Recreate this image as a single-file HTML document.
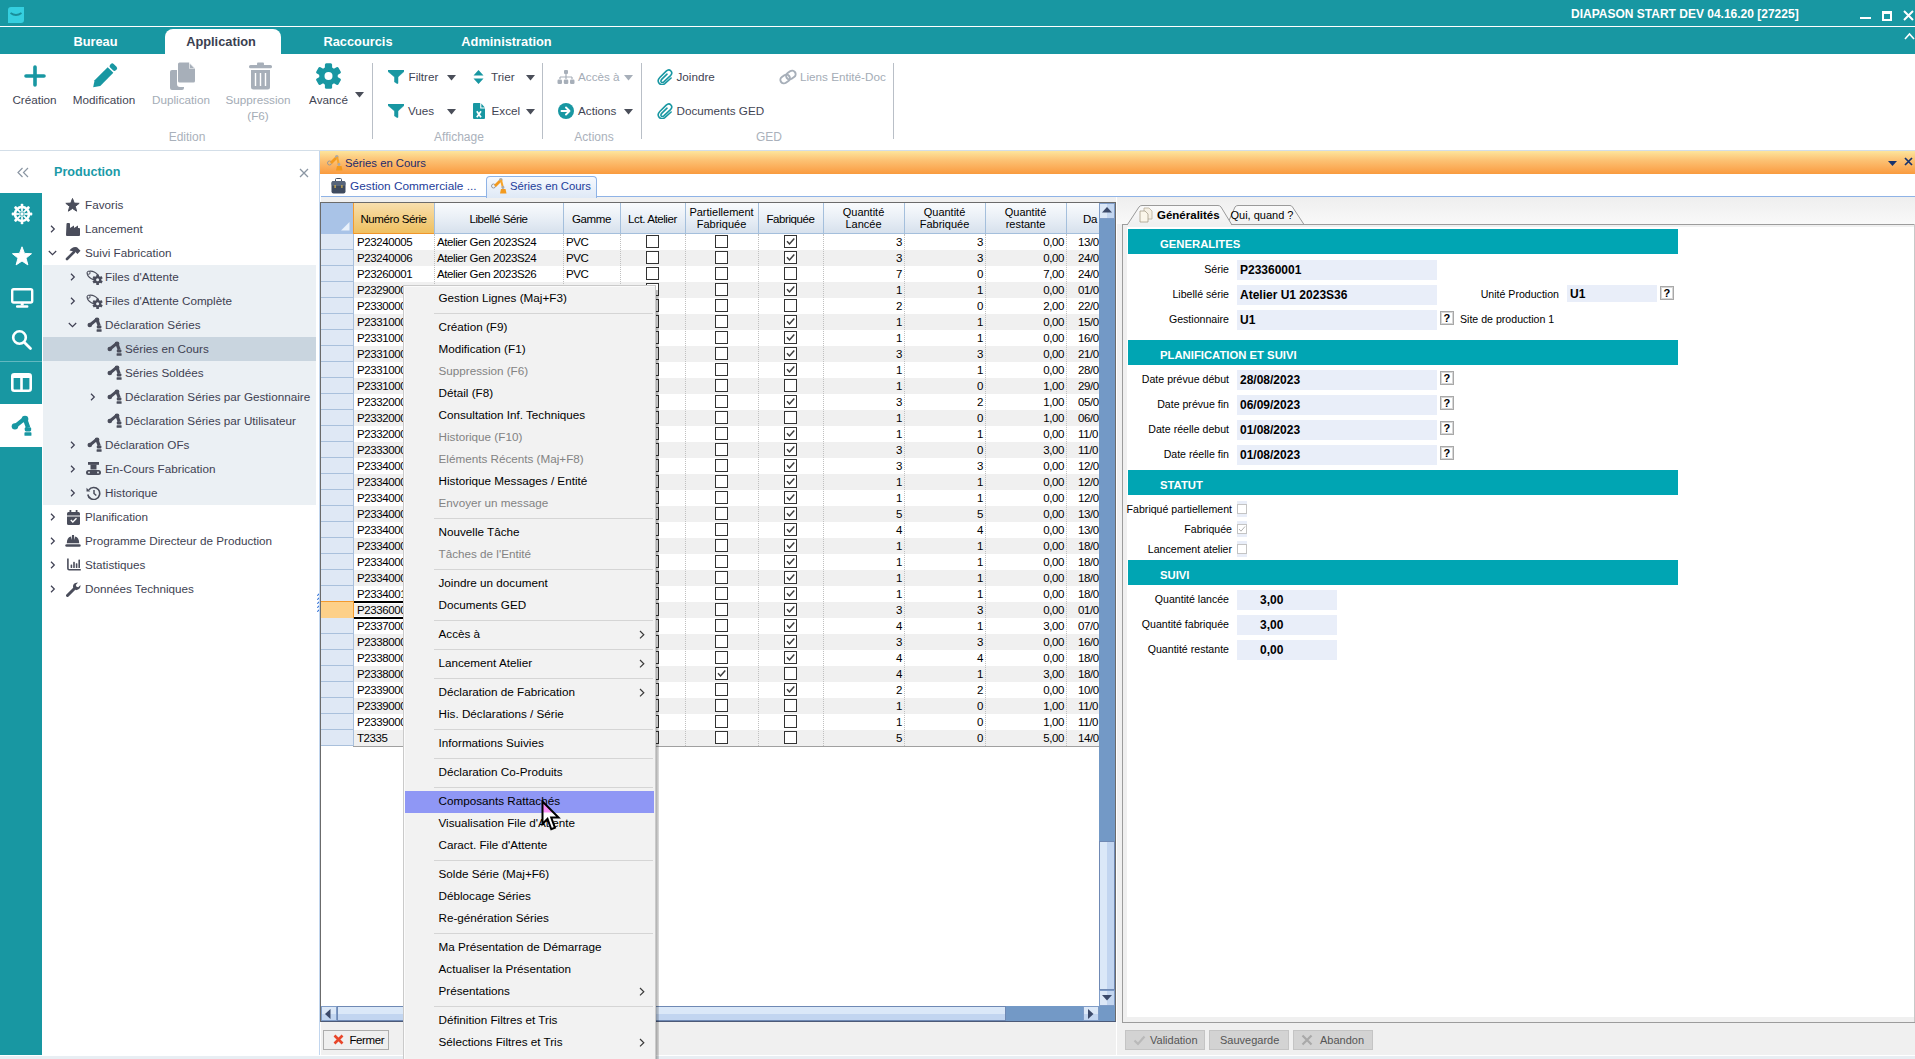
<!DOCTYPE html><html><head><meta charset="utf-8"><style>
html,body{margin:0;padding:0;width:1915px;height:1059px;overflow:hidden;background:#fff;position:relative;font-family:"Liberation Sans",sans-serif;}
.r{position:absolute;}
.t{position:absolute;white-space:nowrap;font-size:12px;color:#3d4352;}
.rb{font-size:11.7px;color:#3f4453;}
.dis{color:#a4acb6;}
.grp{color:#aab1bb;}
.tab{font-weight:bold;font-size:12.8px;color:#fff;}
.tree{font-size:11.7px;color:#3e3f52;}
.g{font-size:11.5px;letter-spacing:-0.4px;color:#000;}
.gh{font-size:11px;color:#000;text-align:center;line-height:12px !important;}
.m{font-size:11.7px;color:#000;}
.md{font-size:11.7px;color:#838383;}
.lbl{font-size:10.6px;color:#000;}
.val{font-size:12px;font-weight:bold;color:#000;}
.sec{font-size:11.3px;font-weight:bold;color:#fff;}
</style></head><body>

<div class="r" style="left:0px;top:0px;width:1915px;height:26px;background:#1897a2"></div>
<div class="r" style="left:0px;top:26px;width:1915px;height:1px;background:#ffffff"></div>
<div class="r" style="left:0px;top:27px;width:1915px;height:27px;background:#1897a2"></div>
<div class="r" style="left:8px;top:7px;width:16px;height:16px;background:#35cfdf;border-radius:3px 0 3px 0"></div>
<svg class="r" style="left:10px;top:12px" width="12" height="5" viewBox="0 0 12 5"><path d="M0.5 1 Q6 5 11.5 1" stroke="#1a8e9a" stroke-width="1.8" fill="none"/></svg>
<div class="t " style="left:1571px;top:5.0px;height:18px;line-height:18px;color:#fff;font-weight:bold;font-size:12px">DIAPASON START DEV 04.16.20 [27225]</div>
<div class="r" style="left:1860px;top:17px;width:11px;height:2px;background:#fff"></div>
<div class="r" style="left:1882px;top:11px;width:10px;height:10px;border:2px solid #fff;border-top-width:3px;box-sizing:border-box"></div>
<svg class="r" style="left:1903px;top:10px" width="11" height="11" viewBox="0 0 11 11"><path d="M1 1 L10 10 M10 1 L1 10" stroke="#fff" stroke-width="2"/></svg>
<svg class="r" style="left:1904px;top:32px" width="11" height="8" viewBox="0 0 11 8"><path d="M1 7 L5.5 2 L10 7" stroke="#fff" stroke-width="1.6" fill="none"/></svg>
<div class="r" style="left:165px;top:29px;width:116px;height:25px;background:#fff;border-radius:8px 8px 0 0"></div>
<div class="t tab" style="left:-104.5px;width:400px;text-align:center;top:32.5px;height:18px;line-height:18px;">Bureau</div>
<div class="t tab" style="left:21px;width:400px;text-align:center;top:32.5px;height:18px;line-height:18px;color:#3a4050">Application</div>
<div class="t tab" style="left:158px;width:400px;text-align:center;top:32.5px;height:18px;line-height:18px;">Raccourcis</div>
<div class="t tab" style="left:306.5px;width:400px;text-align:center;top:32.5px;height:18px;line-height:18px;">Administration</div>
<div class="r" style="left:0px;top:150px;width:1915px;height:1px;background:#d3dee8"></div>
<svg class="r" style="left:24px;top:65px" width="22" height="22" viewBox="0 0 22 22"><path d="M11 2 V20 M2 11 H20" stroke="#1897a2" stroke-width="3.6" stroke-linecap="round"/></svg>
<div class="t rb" style="left:-165.5px;width:400px;text-align:center;top:91.5px;height:16px;line-height:16px;">Création</div>
<svg class="r" style="left:91px;top:62px" width="27" height="28" viewBox="0 0 27 28"><g transform="rotate(45 13.5 14)"><rect x="9.5" y="-1" width="8" height="5" rx="2" fill="#1897a2"/><path d="M9.5 5.5 H17.5 V24 L13.5 30 L9.5 24 Z" fill="#1897a2"/></g></svg>
<div class="t rb" style="left:-96px;width:400px;text-align:center;top:91.5px;height:16px;line-height:16px;">Modification</div>
<svg class="r" style="left:168px;top:62px" width="28" height="28" viewBox="0 0 28 28"><path d="M2 10 Q2 8 4 8 H9 V22 Q9 25 12 25 H16 V26 Q16 28 14 28 H4 Q2 28 2 26 Z" fill="#a7afb9"/><path d="M10 2 Q10 0.5 11.5 0.5 H21 L27 6.5 V19 Q27 20.5 25.5 20.5 H11.5 Q10 20.5 10 19 Z" fill="#a7afb9"/><path d="M21 0.5 V6.5 H27" fill="#fff"/><path d="M21.6 1.5 L26 5.9 H21.6 Z" fill="#a7afb9"/></svg>
<div class="t rb dis" style="left:-19px;width:400px;text-align:center;top:91.5px;height:16px;line-height:16px;">Duplication</div>
<svg class="r" style="left:249px;top:62px" width="23" height="28" viewBox="0 0 23 28"><rect x="0" y="3" width="23" height="3.2" rx="1.5" fill="#a7afb9"/><rect x="8" y="0.5" width="7" height="3" rx="1" fill="#a7afb9"/><path d="M2 8 H21 V25 Q21 27.5 18.5 27.5 H4.5 Q2 27.5 2 25 Z" fill="#a7afb9"/><path d="M6.5 11 V24 M11.5 11 V24 M16.5 11 V24" stroke="#fff" stroke-width="1.4"/></svg>
<div class="t rb dis" style="left:58px;width:400px;text-align:center;top:91.5px;height:16px;line-height:16px;">Suppression</div>
<div class="t rb dis" style="left:58px;width:400px;text-align:center;top:107.5px;height:16px;line-height:16px;">(F6)</div>
<svg class="r" style="left:316px;top:63px" width="25" height="26" viewBox="0 0 25 26"><g transform="translate(12.5 13)"><rect x="-3.6" y="-12.8" width="7.2" height="6" rx="1.5" transform="rotate(0)" fill="#1897a2"/><rect x="-3.6" y="-12.8" width="7.2" height="6" rx="1.5" transform="rotate(60)" fill="#1897a2"/><rect x="-3.6" y="-12.8" width="7.2" height="6" rx="1.5" transform="rotate(120)" fill="#1897a2"/><rect x="-3.6" y="-12.8" width="7.2" height="6" rx="1.5" transform="rotate(180)" fill="#1897a2"/><rect x="-3.6" y="-12.8" width="7.2" height="6" rx="1.5" transform="rotate(240)" fill="#1897a2"/><rect x="-3.6" y="-12.8" width="7.2" height="6" rx="1.5" transform="rotate(300)" fill="#1897a2"/><circle r="9.3" fill="#1897a2"/><circle r="4" fill="#fff"/></g></svg>
<div class="t rb" style="left:128.5px;width:400px;text-align:center;top:91.5px;height:16px;line-height:16px;">Avancé</div>
<svg class="r" style="left:355px;top:92px" width="9" height="6" viewBox="0 0 9 6"><path d="M0 0 H9 L4.5 5.5 Z" fill="#4a4e59"/></svg>
<div class="t grp" style="left:-13px;width:400px;text-align:center;top:129.0px;height:16px;line-height:16px;">Edition</div>
<div class="r" style="left:372px;top:63px;width:1px;height:76px;background:#b9bfc7"></div>
<div class="r" style="left:542px;top:63px;width:1px;height:76px;background:#b9bfc7"></div>
<div class="r" style="left:641px;top:63px;width:1px;height:76px;background:#b9bfc7"></div>
<div class="r" style="left:893px;top:63px;width:1px;height:76px;background:#b9bfc7"></div>
<svg class="r" style="left:388px;top:70px" width="16" height="14" viewBox="0 0 16 14"><path d="M0 0 H16 V1.5 L10 7 V13 Q10 14 9 13.5 L6.5 12 V7 L0 1.5 Z" fill="#1897a2" stroke="#1897a2" stroke-width="0.5" stroke-linejoin="round"/></svg>
<div class="t rb" style="left:408.5px;top:68.7px;height:16px;line-height:16px;">Filtrer</div>
<svg class="r" style="left:447px;top:75px" width="9" height="6" viewBox="0 0 9 6"><path d="M0 0 H9 L4.5 5.5 Z" fill="#4a4e59"/></svg>
<svg class="r" style="left:388px;top:104px" width="16" height="14" viewBox="0 0 16 14"><path d="M0 0 H16 V1.5 L10 7 V13 Q10 14 9 13.5 L6.5 12 V7 L0 1.5 Z" fill="#1897a2" stroke="#1897a2" stroke-width="0.5" stroke-linejoin="round"/></svg>
<div class="t rb" style="left:408px;top:102.7px;height:16px;line-height:16px;">Vues</div>
<svg class="r" style="left:447px;top:109px" width="9" height="6" viewBox="0 0 9 6"><path d="M0 0 H9 L4.5 5.5 Z" fill="#4a4e59"/></svg>
<svg class="r" style="left:473px;top:70px" width="11" height="14" viewBox="0 0 11 14"><path d="M5.5 0 L10.5 5.5 H0.5 Z M0.5 8.5 H10.5 L5.5 14 Z" fill="#1897a2"/></svg>
<div class="t rb" style="left:491px;top:68.7px;height:16px;line-height:16px;">Trier</div>
<svg class="r" style="left:526px;top:75px" width="9" height="6" viewBox="0 0 9 6"><path d="M0 0 H9 L4.5 5.5 Z" fill="#4a4e59"/></svg>
<svg class="r" style="left:473px;top:103px" width="12" height="16" viewBox="0 0 12 16"><path d="M1 0 H7.2 V5.5 H12 V15 Q12 16 11 16 H1 Q0 16 0 15 V1 Q0 0 1 0 Z" fill="#1897a2"/><path d="M8.3 0.6 L11.8 4.4 H8.3 Z" fill="#1897a2"/><path d="M3.8 8.2 L8 14.2 M8 8.2 L3.8 14.2" stroke="#fff" stroke-width="1.7"/></svg>
<div class="t rb" style="left:491.5px;top:102.7px;height:16px;line-height:16px;">Excel</div>
<svg class="r" style="left:526px;top:109px" width="9" height="6" viewBox="0 0 9 6"><path d="M0 0 H9 L4.5 5.5 Z" fill="#4a4e59"/></svg>
<div class="t grp" style="left:259px;width:400px;text-align:center;top:129.0px;height:16px;line-height:16px;">Affichage</div>
<svg class="r" style="left:557px;top:70px" width="18" height="14" viewBox="0 0 18 14"><rect x="7" y="0" width="4" height="4" rx="1" fill="#a7afb9"/><path d="M9 4 V7 M3 7 H15 M3 7 V9 M9 7 V9 M15 7 V9" stroke="#a7afb9" stroke-width="1.2" fill="none"/><rect x="0.5" y="9.5" width="4.5" height="4.5" rx="1.2" fill="#a7afb9"/><rect x="6.8" y="9.5" width="4.5" height="4.5" rx="1.2" fill="#a7afb9"/><rect x="13" y="9.5" width="4.5" height="4.5" rx="1.2" fill="#a7afb9"/></svg>
<div class="t rb dis" style="left:578px;top:68.7px;height:16px;line-height:16px;">Accès à</div>
<svg class="r" style="left:624px;top:75px" width="9" height="6" viewBox="0 0 9 6"><path d="M0 0 H9 L4.5 5.5 Z" fill="#a7afb9"/></svg>
<svg class="r" style="left:558px;top:103px" width="16" height="16" viewBox="0 0 16 16"><circle cx="8" cy="8" r="8" fill="#1897a2"/><path d="M3.5 8 H11.5 M8 4.5 L11.5 8 L8 11.5" stroke="#fff" stroke-width="1.9" fill="none" stroke-linecap="round" stroke-linejoin="round"/></svg>
<div class="t rb" style="left:578px;top:102.7px;height:16px;line-height:16px;">Actions</div>
<svg class="r" style="left:624px;top:109px" width="9" height="6" viewBox="0 0 9 6"><path d="M0 0 H9 L4.5 5.5 Z" fill="#4a4e59"/></svg>
<div class="t grp" style="left:394px;width:400px;text-align:center;top:129.0px;height:16px;line-height:16px;">Actions</div>
<svg class="r" style="left:657px;top:69px" width="16" height="16" viewBox="0 0 16 16"><path d="M14.1 9 L7.8 14.6 Q4.6 17 2.2 14.4 Q-0.2 11.6 2.8 8.5 L9.2 2.2 Q11.8 -0.2 13.9 2 Q15.9 4.2 13.5 6.6 L6.8 12.8 Q5.2 14.1 4.2 12.9 Q3.4 11.7 4.9 10.1 L10 5.2" stroke="#1897a2" stroke-width="1.6" fill="none" stroke-linecap="round"/></svg>
<div class="t rb" style="left:676.5px;top:68.7px;height:16px;line-height:16px;">Joindre</div>
<svg class="r" style="left:657px;top:103px" width="16" height="16" viewBox="0 0 16 16"><path d="M14.1 9 L7.8 14.6 Q4.6 17 2.2 14.4 Q-0.2 11.6 2.8 8.5 L9.2 2.2 Q11.8 -0.2 13.9 2 Q15.9 4.2 13.5 6.6 L6.8 12.8 Q5.2 14.1 4.2 12.9 Q3.4 11.7 4.9 10.1 L10 5.2" stroke="#1897a2" stroke-width="1.6" fill="none" stroke-linecap="round"/></svg>
<div class="t rb" style="left:676.5px;top:102.7px;height:16px;line-height:16px;">Documents GED</div>
<svg class="r" style="left:778px;top:69px" width="20" height="16" viewBox="0 0 20 16"><g stroke="#a7afb9" stroke-width="2" fill="none" transform="rotate(-35 10 8)"><rect x="1.5" y="4.5" width="10" height="7" rx="3.5"/><rect x="8.5" y="4.5" width="10" height="7" rx="3.5"/></g></svg>
<div class="t rb dis" style="left:800px;top:68.7px;height:16px;line-height:16px;">Liens Entité-Doc</div>
<div class="t grp" style="left:569px;width:400px;text-align:center;top:129.0px;height:16px;line-height:16px;">GED</div>
<div class="r" style="left:0px;top:193px;width:42px;height:862px;background:#1897a2"></div>
<div class="r" style="left:0px;top:1055px;width:1915px;height:1px;background:#ffffff"></div>
<div class="r" style="left:0px;top:1056px;width:1915px;height:3px;background:#e8eef3"></div>
<svg class="r" style="left:11px;top:203px" width="22" height="22" viewBox="0 0 22 22"><g transform="translate(11 11)"><circle r="7" fill="none" stroke="#fff" stroke-width="2.6"/><circle r="1.7" fill="#fff"/><g transform="rotate(0)"><path d="M0 -2.2 V-8.6" stroke="#fff" stroke-width="1.7"/><rect x="-1.4" y="-10.3" width="2.8" height="2.6" rx="1" fill="#fff"/></g><g transform="rotate(45)"><path d="M0 -2.2 V-8.6" stroke="#fff" stroke-width="1.7"/><rect x="-1.4" y="-10.3" width="2.8" height="2.6" rx="1" fill="#fff"/></g><g transform="rotate(90)"><path d="M0 -2.2 V-8.6" stroke="#fff" stroke-width="1.7"/><rect x="-1.4" y="-10.3" width="2.8" height="2.6" rx="1" fill="#fff"/></g><g transform="rotate(135)"><path d="M0 -2.2 V-8.6" stroke="#fff" stroke-width="1.7"/><rect x="-1.4" y="-10.3" width="2.8" height="2.6" rx="1" fill="#fff"/></g><g transform="rotate(180)"><path d="M0 -2.2 V-8.6" stroke="#fff" stroke-width="1.7"/><rect x="-1.4" y="-10.3" width="2.8" height="2.6" rx="1" fill="#fff"/></g><g transform="rotate(225)"><path d="M0 -2.2 V-8.6" stroke="#fff" stroke-width="1.7"/><rect x="-1.4" y="-10.3" width="2.8" height="2.6" rx="1" fill="#fff"/></g><g transform="rotate(270)"><path d="M0 -2.2 V-8.6" stroke="#fff" stroke-width="1.7"/><rect x="-1.4" y="-10.3" width="2.8" height="2.6" rx="1" fill="#fff"/></g><g transform="rotate(315)"><path d="M0 -2.2 V-8.6" stroke="#fff" stroke-width="1.7"/><rect x="-1.4" y="-10.3" width="2.8" height="2.6" rx="1" fill="#fff"/></g></g></svg>
<svg class="r" style="left:11px;top:245px" width="22" height="22" viewBox="0 0 22 22"><polygon points="11.00,1.80 13.47,8.40 20.51,8.71 14.99,13.10 16.88,19.89 11.00,16.00 5.12,19.89 7.01,13.10 1.49,8.71 8.53,8.40" fill="#fff" stroke="#fff" stroke-width="1" stroke-linejoin="round"/></svg>
<svg class="r" style="left:10.5px;top:288px" width="23" height="20" viewBox="0 0 23 20"><rect x="1.2" y="1.2" width="20" height="13.3" rx="1.5" fill="none" stroke="#fff" stroke-width="2.4"/><rect x="9.7" y="14" width="3" height="3.5" fill="#fff"/><rect x="5" y="17.3" width="12.4" height="2.4" rx="1" fill="#fff"/></svg>
<svg class="r" style="left:11px;top:329px" width="22" height="22" viewBox="0 0 22 22"><circle cx="8.5" cy="8.5" r="6.3" fill="none" stroke="#fff" stroke-width="2.6"/><path d="M13.2 13.2 L19.5 19.5" stroke="#fff" stroke-width="2.8" stroke-linecap="round"/></svg>
<div class="r" style="left:0px;top:361px;width:42px;height:1px;background:#62b8c0"></div>
<svg class="r" style="left:11px;top:373px" width="21" height="19" viewBox="0 0 21 19"><rect x="1.3" y="1.3" width="18.4" height="16.4" rx="2" fill="none" stroke="#fff" stroke-width="2.6"/><rect x="9.2" y="3" width="2.6" height="14" fill="#fff"/><rect x="2" y="2" width="17" height="3" fill="#fff"/></svg>
<div class="r" style="left:0px;top:404px;width:42px;height:43px;background:#fff"></div>
<svg class="r" style="left:11px;top:415px" width="21" height="22" viewBox="0 0 15 15.5"><g fill="#1897a2"><circle cx="2.8" cy="8" r="2.3"/><path d="M3.5 7.5 L9.5 2.6" stroke="#1897a2" stroke-width="3" stroke-linecap="round"/><circle cx="10" cy="2.8" r="2.4"/><path d="M10.3 3.5 L12.2 8.8" stroke="#1897a2" stroke-width="3.2"/><rect x="9.8" y="8.6" width="4.6" height="3" rx="1"/><rect x="9.6" y="12.2" width="5" height="2.6" rx="0.5"/></g></svg>
<svg class="r" style="left:17px;top:167px" width="12" height="11" viewBox="0 0 12 11"><path d="M5.5 1 L1 5.5 L5.5 10 M11 1 L6.5 5.5 L11 10" stroke="#8b96a3" stroke-width="1.2" fill="none"/></svg>
<div class="t " style="left:54px;top:163.0px;height:18px;line-height:18px;color:#1a9aa8;font-weight:bold;font-size:12.6px">Production</div>
<svg class="r" style="left:299px;top:167.5px" width="10" height="10" viewBox="0 0 10 10"><path d="M1 1 L9 9 M9 1 L1 9" stroke="#8b96a3" stroke-width="1.3"/></svg>
<div class="r" style="left:43px;top:265px;width:273px;height:240px;background:#ebf0f4"></div>
<div class="r" style="left:43px;top:337px;width:273px;height:24px;background:#c9d5df"></div>
<svg class="r" style="left:65px;top:197.5px" width="15" height="14" viewBox="0 0 15 14"><polygon points="7.50,0.50 9.23,5.12 14.16,5.34 10.30,8.41 11.61,13.16 7.50,10.44 3.39,13.16 4.70,8.41 0.84,5.34 5.77,5.12" fill="#4a4d5b" stroke="#4a4d5b" stroke-width="1" stroke-linejoin="round"/></svg>
<div class="t tree" style="left:85px;top:195.5px;height:18px;line-height:18px;">Favoris</div>
<svg class="r" style="left:49.5px;top:224.5px" width="6" height="8" viewBox="0 0 6 8"><path d="M1 0.8 L4.3 4 L1 7.2" stroke="#3e3f52" stroke-width="1.2" fill="none"/></svg>
<svg class="r" style="left:66px;top:222.5px" width="14" height="13" viewBox="0 0 14 13"><path d="M0.5 1 Q0.5 0 1.5 0 H3 Q4 0 4 1 V5 L8 2.5 V5 L12 2.5 V5 H13 Q14 5 14 6 V12 Q14 13 13 13 H1 Q0 13 0 12 Z" fill="#4a4d5b"/></svg>
<div class="t tree" style="left:85px;top:219.5px;height:18px;line-height:18px;">Lancement</div>
<svg class="r" style="left:48px;top:250.0px" width="9" height="6" viewBox="0 0 9 6"><path d="M0.8 1 L4.5 4.7 L8.2 1" stroke="#3e3f52" stroke-width="1.2" fill="none"/></svg>
<svg class="r" style="left:65px;top:245.5px" width="16" height="15" viewBox="0 0 16 15"><path d="M4.5 4.5 Q7.5 0 12 1.2 L15.5 4.8 L12.5 8 L10.2 5.8 Z" fill="#4a4d5b"/><path d="M2 13 L9 6" stroke="#4a4d5b" stroke-width="2.6" stroke-linecap="round"/></svg>
<div class="t tree" style="left:85px;top:243.5px;height:18px;line-height:18px;">Suivi Fabrication</div>
<svg class="r" style="left:69.5px;top:272.5px" width="6" height="8" viewBox="0 0 6 8"><path d="M1 0.8 L4.3 4 L1 7.2" stroke="#3e3f52" stroke-width="1.2" fill="none"/></svg>
<svg class="r" style="left:86px;top:269.5px" width="17" height="15" viewBox="0 0 17 15"><ellipse cx="7" cy="5.5" rx="6.3" ry="3.6" transform="rotate(28 7 5.5)" fill="none" stroke="#4a4d5b" stroke-width="1.1"/><circle cx="2.6" cy="2.8" r="1.5" fill="#ebf0f4" stroke="#4a4d5b" stroke-width="1"/><g transform="translate(11.6 9.8)"><circle r="3.7" fill="#4a4d5b"/><rect x="-1.3" y="-5.2" width="2.6" height="2.8" fill="#4a4d5b" transform="rotate(0)"/><rect x="-1.3" y="-5.2" width="2.6" height="2.8" fill="#4a4d5b" transform="rotate(60)"/><rect x="-1.3" y="-5.2" width="2.6" height="2.8" fill="#4a4d5b" transform="rotate(120)"/><rect x="-1.3" y="-5.2" width="2.6" height="2.8" fill="#4a4d5b" transform="rotate(180)"/><rect x="-1.3" y="-5.2" width="2.6" height="2.8" fill="#4a4d5b" transform="rotate(240)"/><rect x="-1.3" y="-5.2" width="2.6" height="2.8" fill="#4a4d5b" transform="rotate(300)"/><circle r="1.5" fill="#ebf0f4"/></g></svg>
<div class="t tree" style="left:105px;top:267.5px;height:18px;line-height:18px;">Files d'Attente</div>
<svg class="r" style="left:69.5px;top:296.5px" width="6" height="8" viewBox="0 0 6 8"><path d="M1 0.8 L4.3 4 L1 7.2" stroke="#3e3f52" stroke-width="1.2" fill="none"/></svg>
<svg class="r" style="left:86px;top:293.5px" width="17" height="15" viewBox="0 0 17 15"><ellipse cx="7" cy="5.5" rx="6.3" ry="3.6" transform="rotate(28 7 5.5)" fill="none" stroke="#4a4d5b" stroke-width="1.1"/><circle cx="2.6" cy="2.8" r="1.5" fill="#ebf0f4" stroke="#4a4d5b" stroke-width="1"/><g transform="translate(11.6 9.8)"><circle r="3.7" fill="#4a4d5b"/><rect x="-1.3" y="-5.2" width="2.6" height="2.8" fill="#4a4d5b" transform="rotate(0)"/><rect x="-1.3" y="-5.2" width="2.6" height="2.8" fill="#4a4d5b" transform="rotate(60)"/><rect x="-1.3" y="-5.2" width="2.6" height="2.8" fill="#4a4d5b" transform="rotate(120)"/><rect x="-1.3" y="-5.2" width="2.6" height="2.8" fill="#4a4d5b" transform="rotate(180)"/><rect x="-1.3" y="-5.2" width="2.6" height="2.8" fill="#4a4d5b" transform="rotate(240)"/><rect x="-1.3" y="-5.2" width="2.6" height="2.8" fill="#4a4d5b" transform="rotate(300)"/><circle r="1.5" fill="#ebf0f4"/></g></svg>
<div class="t tree" style="left:105px;top:291.5px;height:18px;line-height:18px;">Files d'Attente Complète</div>
<svg class="r" style="left:68px;top:322.0px" width="9" height="6" viewBox="0 0 9 6"><path d="M0.8 1 L4.5 4.7 L8.2 1" stroke="#3e3f52" stroke-width="1.2" fill="none"/></svg>
<svg class="r" style="left:87px;top:317.0px" width="15" height="15" viewBox="0 0 15 15"><g fill="#4a4d5b"><circle cx="2.8" cy="8" r="2.3"/><path d="M3.5 7.5 L9.5 2.6" stroke="#4a4d5b" stroke-width="3" stroke-linecap="round"/><circle cx="10" cy="2.8" r="2.4"/><path d="M10.3 3.5 L12.2 8.8" stroke="#4a4d5b" stroke-width="3.2"/><rect x="9.8" y="8.6" width="4.6" height="3" rx="1"/><rect x="9.6" y="12.2" width="5" height="2.6" rx="0.5"/></g></svg>
<div class="t tree" style="left:105px;top:315.5px;height:18px;line-height:18px;">Déclaration Séries</div>
<svg class="r" style="left:107px;top:341.0px" width="15" height="15" viewBox="0 0 15 15"><g fill="#4a4d5b"><circle cx="2.8" cy="8" r="2.3"/><path d="M3.5 7.5 L9.5 2.6" stroke="#4a4d5b" stroke-width="3" stroke-linecap="round"/><circle cx="10" cy="2.8" r="2.4"/><path d="M10.3 3.5 L12.2 8.8" stroke="#4a4d5b" stroke-width="3.2"/><rect x="9.8" y="8.6" width="4.6" height="3" rx="1"/><rect x="9.6" y="12.2" width="5" height="2.6" rx="0.5"/></g></svg>
<div class="t tree" style="left:125px;top:339.5px;height:18px;line-height:18px;">Séries en Cours</div>
<svg class="r" style="left:107px;top:365.0px" width="15" height="15" viewBox="0 0 15 15"><g fill="#4a4d5b"><circle cx="2.8" cy="8" r="2.3"/><path d="M3.5 7.5 L9.5 2.6" stroke="#4a4d5b" stroke-width="3" stroke-linecap="round"/><circle cx="10" cy="2.8" r="2.4"/><path d="M10.3 3.5 L12.2 8.8" stroke="#4a4d5b" stroke-width="3.2"/><rect x="9.8" y="8.6" width="4.6" height="3" rx="1"/><rect x="9.6" y="12.2" width="5" height="2.6" rx="0.5"/></g></svg>
<div class="t tree" style="left:125px;top:363.5px;height:18px;line-height:18px;">Séries Soldées</div>
<svg class="r" style="left:89.5px;top:392.5px" width="6" height="8" viewBox="0 0 6 8"><path d="M1 0.8 L4.3 4 L1 7.2" stroke="#3e3f52" stroke-width="1.2" fill="none"/></svg>
<svg class="r" style="left:107px;top:389.0px" width="15" height="15" viewBox="0 0 15 15"><g fill="#4a4d5b"><circle cx="2.8" cy="8" r="2.3"/><path d="M3.5 7.5 L9.5 2.6" stroke="#4a4d5b" stroke-width="3" stroke-linecap="round"/><circle cx="10" cy="2.8" r="2.4"/><path d="M10.3 3.5 L12.2 8.8" stroke="#4a4d5b" stroke-width="3.2"/><rect x="9.8" y="8.6" width="4.6" height="3" rx="1"/><rect x="9.6" y="12.2" width="5" height="2.6" rx="0.5"/></g></svg>
<div class="t tree" style="left:125px;top:387.5px;height:18px;line-height:18px;">Déclaration Séries par Gestionnaire</div>
<svg class="r" style="left:107px;top:413.0px" width="15" height="15" viewBox="0 0 15 15"><g fill="#4a4d5b"><circle cx="2.8" cy="8" r="2.3"/><path d="M3.5 7.5 L9.5 2.6" stroke="#4a4d5b" stroke-width="3" stroke-linecap="round"/><circle cx="10" cy="2.8" r="2.4"/><path d="M10.3 3.5 L12.2 8.8" stroke="#4a4d5b" stroke-width="3.2"/><rect x="9.8" y="8.6" width="4.6" height="3" rx="1"/><rect x="9.6" y="12.2" width="5" height="2.6" rx="0.5"/></g></svg>
<div class="t tree" style="left:125px;top:411.5px;height:18px;line-height:18px;">Déclaration Séries par Utilisateur</div>
<svg class="r" style="left:69.5px;top:440.5px" width="6" height="8" viewBox="0 0 6 8"><path d="M1 0.8 L4.3 4 L1 7.2" stroke="#3e3f52" stroke-width="1.2" fill="none"/></svg>
<svg class="r" style="left:87px;top:437.0px" width="15" height="15" viewBox="0 0 15 15"><g fill="#4a4d5b"><circle cx="2.8" cy="8" r="2.3"/><path d="M3.5 7.5 L9.5 2.6" stroke="#4a4d5b" stroke-width="3" stroke-linecap="round"/><circle cx="10" cy="2.8" r="2.4"/><path d="M10.3 3.5 L12.2 8.8" stroke="#4a4d5b" stroke-width="3.2"/><rect x="9.8" y="8.6" width="4.6" height="3" rx="1"/><rect x="9.6" y="12.2" width="5" height="2.6" rx="0.5"/></g></svg>
<div class="t tree" style="left:105px;top:435.5px;height:18px;line-height:18px;">Déclaration OFs</div>
<svg class="r" style="left:69.5px;top:464.5px" width="6" height="8" viewBox="0 0 6 8"><path d="M1 0.8 L4.3 4 L1 7.2" stroke="#3e3f52" stroke-width="1.2" fill="none"/></svg>
<svg class="r" style="left:86px;top:461.5px" width="15" height="14" viewBox="0 0 15 14"><rect x="2" y="0" width="11" height="2.8" fill="#4a4d5b"/><rect x="4.5" y="2.5" width="6" height="5" fill="#4a4d5b"/><rect x="0" y="8" width="15" height="5" rx="2.5" fill="#4a4d5b"/><circle cx="3" cy="10.5" r="0.9" fill="#ebf0f4"/><circle cx="12" cy="10.5" r="0.9" fill="#ebf0f4"/></svg>
<div class="t tree" style="left:105px;top:459.5px;height:18px;line-height:18px;">En-Cours Fabrication</div>
<svg class="r" style="left:69.5px;top:488.5px" width="6" height="8" viewBox="0 0 6 8"><path d="M1 0.8 L4.3 4 L1 7.2" stroke="#3e3f52" stroke-width="1.2" fill="none"/></svg>
<svg class="r" style="left:86px;top:485.5px" width="15" height="14" viewBox="0 0 15 14"><path d="M2.8 4 A6 6 0 1 1 1.8 8.5" stroke="#4a4d5b" stroke-width="1.6" fill="none"/><path d="M0.5 1.8 V5.5 H4.2 Z" fill="#4a4d5b"/><path d="M8 4 V7.5 L10.3 9.5" stroke="#4a4d5b" stroke-width="1.5" fill="none"/></svg>
<div class="t tree" style="left:105px;top:483.5px;height:18px;line-height:18px;">Historique</div>
<svg class="r" style="left:49.5px;top:512.5px" width="6" height="8" viewBox="0 0 6 8"><path d="M1 0.8 L4.3 4 L1 7.2" stroke="#3e3f52" stroke-width="1.2" fill="none"/></svg>
<svg class="r" style="left:67px;top:509.5px" width="13" height="15" viewBox="0 0 13 15"><rect x="2.5" y="0" width="1.8" height="3" fill="#4a4d5b"/><rect x="8.7" y="0" width="1.8" height="3" fill="#4a4d5b"/><path d="M0 3.5 Q0 2 1.5 2 H11.5 Q13 2 13 3.5 V5.5 H0 Z" fill="#4a4d5b"/><path d="M0 6.5 H13 V13.5 Q13 15 11.5 15 H1.5 Q0 15 0 13.5 Z" fill="#4a4d5b"/><path d="M3.8 10 L5.8 12 L9.5 8.2" stroke="#fff" stroke-width="1.4" fill="none"/></svg>
<div class="t tree" style="left:85px;top:507.5px;height:18px;line-height:18px;">Planification</div>
<svg class="r" style="left:49.5px;top:536.5px" width="6" height="8" viewBox="0 0 6 8"><path d="M1 0.8 L4.3 4 L1 7.2" stroke="#3e3f52" stroke-width="1.2" fill="none"/></svg>
<svg class="r" style="left:65px;top:534.5px" width="16" height="12" viewBox="0 0 16 12"><path d="M1.8 8.3 Q1.8 2.8 5.8 1.6 L6.5 5 L7 0 H9 L9.5 5 L10.2 1.6 Q14.2 2.8 14.2 8.3 Z" fill="#4a4d5b"/><rect x="0.3" y="9.2" width="15.4" height="2.6" rx="1.3" fill="#4a4d5b"/></svg>
<div class="t tree" style="left:85px;top:531.5px;height:18px;line-height:18px;">Programme Directeur de Production</div>
<svg class="r" style="left:49.5px;top:560.5px" width="6" height="8" viewBox="0 0 6 8"><path d="M1 0.8 L4.3 4 L1 7.2" stroke="#3e3f52" stroke-width="1.2" fill="none"/></svg>
<svg class="r" style="left:67px;top:558.0px" width="14" height="13" viewBox="0 0 14 13"><path d="M0.9 0.5 V10.6 Q0.9 11.8 2.1 11.8 H13.8" stroke="#4a4d5b" stroke-width="1.6" fill="none"/><rect x="3.6" y="6.5" width="1.6" height="3.5" rx="0.6" fill="#4a4d5b"/><rect x="6.2" y="3.8" width="1.6" height="6.2" rx="0.6" fill="#4a4d5b"/><rect x="8.8" y="5.2" width="1.6" height="4.8" rx="0.6" fill="#4a4d5b"/><rect x="11.4" y="1.5" width="1.6" height="8.5" rx="0.6" fill="#4a4d5b"/></svg>
<div class="t tree" style="left:85px;top:555.5px;height:18px;line-height:18px;">Statistiques</div>
<svg class="r" style="left:49.5px;top:584.5px" width="6" height="8" viewBox="0 0 6 8"><path d="M1 0.8 L4.3 4 L1 7.2" stroke="#3e3f52" stroke-width="1.2" fill="none"/></svg>
<svg class="r" style="left:66px;top:581.5px" width="15" height="15" viewBox="0 0 15 15"><path d="M1.5 13.5 L8 7" stroke="#4a4d5b" stroke-width="3" stroke-linecap="round"/><path d="M7 5.5 Q6.5 1.5 10.5 0.8 L12 0.6 L9.8 3 L10.5 4.8 L12.2 5.3 L14.5 3 Q14.8 7.5 10 8.2 Z" fill="#4a4d5b"/></svg>
<div class="t tree" style="left:85px;top:579.5px;height:18px;line-height:18px;">Données Techniques</div>
<svg class="r" style="left:317px;top:593px" width="3" height="3" viewBox="0 0 3 3"><path d="M0.3 2.7 L2.7 0.3" stroke="#2f6fd6" stroke-width="1.1"/></svg>
<svg class="r" style="left:317px;top:597px" width="3" height="3" viewBox="0 0 3 3"><path d="M0.3 2.7 L2.7 0.3" stroke="#2f6fd6" stroke-width="1.1"/></svg>
<svg class="r" style="left:317px;top:601px" width="3" height="3" viewBox="0 0 3 3"><path d="M0.3 2.7 L2.7 0.3" stroke="#2f6fd6" stroke-width="1.1"/></svg>
<svg class="r" style="left:317px;top:605px" width="3" height="3" viewBox="0 0 3 3"><path d="M0.3 2.7 L2.7 0.3" stroke="#2f6fd6" stroke-width="1.1"/></svg>
<svg class="r" style="left:317px;top:609px" width="3" height="3" viewBox="0 0 3 3"><path d="M0.3 2.7 L2.7 0.3" stroke="#2f6fd6" stroke-width="1.1"/></svg>
<div class="r" style="left:319px;top:151px;width:1px;height:904px;background:#c2d6ee"></div>
<div class="r" style="left:320px;top:151px;width:1595px;height:23px;background:linear-gradient(#fde59c,#fcc274 40%,#fbab56 75%,#f99b3e)"></div>
<svg class="r" style="left:327px;top:154px" width="16" height="17" viewBox="0 0 16 17"><g><circle cx="2.5" cy="9" r="2" fill="none" stroke="#999" stroke-width="1"/><path d="M3 8 L9 2 L11 4 L5 10 Z" fill="#f39a1e"/><circle cx="9.8" cy="2.8" r="1.8" fill="#aaa"/><path d="M9 3 L11 2.5 L13 11 L11 11.5 Z" fill="#f7a52a"/><circle cx="12" cy="10.5" r="1.4" fill="#aaa"/><path d="M10 12 H14.5 L15.5 16.5 H9 Z" fill="#f39a1e"/></g></svg>
<div class="t " style="left:345px;top:153.5px;height:18px;line-height:18px;font-size:11.3px;color:#1d2a6b">Séries en Cours</div>
<svg class="r" style="left:1887.5px;top:160.5px" width="9" height="5" viewBox="0 0 9 5"><path d="M0 0 H9 L4.5 5 Z" fill="#17336e"/></svg>
<svg class="r" style="left:1903.5px;top:157px" width="9" height="9" viewBox="0 0 9 9"><path d="M1 1 L8 8 M8 1 L1 8" stroke="#17336e" stroke-width="1.7"/></svg>
<div class="r" style="left:321px;top:174px;width:1594px;height:23px;background:#fff"></div>
<div class="r" style="left:321px;top:196px;width:1594px;height:1px;background:#8fb3e6"></div>
<div class="r" style="left:321px;top:197px;width:796px;height:5px;background:#f0f0f0"></div>
<svg class="r" style="left:331px;top:178px" width="15" height="16" viewBox="0 0 15 16"><rect x="0.5" y="3" width="14" height="12.5" rx="2" fill="#3e4a5e"/><path d="M4.5 3 V1.5 Q4.5 0.5 5.5 0.5 H9.5 Q10.5 0.5 10.5 1.5 V3" stroke="#3e4a5e" fill="none"/><rect x="0.5" y="3" width="14" height="5" rx="2" fill="#56647a"/><rect x="3.5" y="7" width="1.2" height="3" fill="#d9b44a"/><rect x="10.3" y="7" width="1.2" height="3" fill="#d9b44a"/></svg>
<div class="t " style="left:350px;top:176.5px;height:18px;line-height:18px;font-size:11.8px;color:#1d3d9a">Gestion Commerciale ...</div>
<div class="r" style="left:486px;top:176px;width:109px;height:21px;border:1px solid #8fb3e6;border-bottom:none;border-radius:4px 4px 0 0;background:linear-gradient(#f6f9fe,#dfe9f6)"></div>
<svg class="r" style="left:491px;top:177px" width="16" height="17" viewBox="0 0 16 17"><g><circle cx="2.5" cy="9" r="2" fill="none" stroke="#999" stroke-width="1"/><path d="M3 8 L9 2 L11 4 L5 10 Z" fill="#f39a1e"/><circle cx="9.8" cy="2.8" r="1.8" fill="#aaa"/><path d="M9 3 L11 2.5 L13 11 L11 11.5 Z" fill="#f7a52a"/><circle cx="12" cy="10.5" r="1.4" fill="#aaa"/><path d="M10 12 H14.5 L15.5 16.5 H9 Z" fill="#f39a1e"/></g></svg>
<div class="t " style="left:510px;top:176.5px;height:18px;line-height:18px;font-size:11.3px;color:#1d3d9a">Séries en Cours</div>
<div class="r" style="left:320px;top:202px;width:796px;height:1px;background:#6b6b6b"></div>
<div class="r" style="left:320px;top:202px;width:1px;height:820px;background:#6b6b6b"></div>
<div class="r" style="left:1115px;top:202px;width:1px;height:820px;background:#6b6b6b"></div>
<div class="r" style="left:320px;top:1021px;width:796px;height:1px;background:#6b6b6b"></div>
<div class="r" style="left:321px;top:203px;width:794px;height:818px;background:#fff"></div>
<div class="r" style="left:353px;top:203px;width:746px;height:30px;background:linear-gradient(#f9fbfd,#e9eff6 50%,#d7e1ed)"></div>
<div class="r" style="left:321px;top:203px;width:32px;height:31px;background:#a9c3e7"></div>
<svg class="r" style="left:341px;top:222px" width="9" height="9" viewBox="0 0 9 9"><path d="M8.5 0 V8.5 H0 Z" fill="#e9f1fb"/></svg>
<div class="r" style="left:353px;top:203px;width:81px;height:30px;background:linear-gradient(#f8dfae,#f3cf86 50%,#efc060)"></div>
<div class="r" style="left:353px;top:233px;width:81px;height:1px;background:#f0962a"></div>
<div class="r" style="left:353px;top:203px;width:1px;height:31px;background:#f39a2e"></div>
<div class="r" style="left:434px;top:233px;width:665px;height:1px;background:#a4bfdc"></div>
<div class="r" style="left:434px;top:203px;width:1px;height:31px;background:#a4bfdc"></div>
<div class="r" style="left:563px;top:203px;width:1px;height:31px;background:#a4bfdc"></div>
<div class="r" style="left:620px;top:203px;width:1px;height:31px;background:#a4bfdc"></div>
<div class="r" style="left:685px;top:203px;width:1px;height:31px;background:#a4bfdc"></div>
<div class="r" style="left:758px;top:203px;width:1px;height:31px;background:#a4bfdc"></div>
<div class="r" style="left:823px;top:203px;width:1px;height:31px;background:#a4bfdc"></div>
<div class="r" style="left:904px;top:203px;width:1px;height:31px;background:#a4bfdc"></div>
<div class="r" style="left:985px;top:203px;width:1px;height:31px;background:#a4bfdc"></div>
<div class="r" style="left:1066px;top:203px;width:1px;height:31px;background:#a4bfdc"></div>
<div class="r" style="left:1099px;top:203px;width:1px;height:31px;background:#a4bfdc"></div>
<div class="t g" style="left:193.5px;width:400px;text-align:center;top:211.5px;height:14px;line-height:14px;">Numéro Série</div>
<div class="t g" style="left:298.5px;width:400px;text-align:center;top:211.5px;height:14px;line-height:14px;">Libellé Série</div>
<div class="t g" style="left:391.5px;width:400px;text-align:center;top:211.5px;height:14px;line-height:14px;">Gamme</div>
<div class="t g" style="left:452.5px;width:400px;text-align:center;top:211.5px;height:14px;line-height:14px;">Lct. Atelier</div>
<div class="t gh" style="left:685px;width:73px;top:205.5px;height:26px;">Partiellement<br>Fabriquée</div>
<div class="t g" style="left:590.5px;width:400px;text-align:center;top:211.5px;height:14px;line-height:14px;">Fabriquée</div>
<div class="t gh" style="left:823px;width:81px;top:205.5px;height:26px;">Quantité<br>Lancée</div>
<div class="t gh" style="left:904px;width:81px;top:205.5px;height:26px;">Quantité<br>Fabriquée</div>
<div class="t gh" style="left:985px;width:81px;top:205.5px;height:26px;">Quantité<br>restante</div>
<div class="t g" style="left:1083px;top:211.5px;height:14px;line-height:14px;">Da</div>
<div class="r" style="left:353px;top:234px;width:746px;height:16px;background:#ffffff"></div>
<div class="r" style="left:321px;top:234px;width:33px;height:16px;background:#dfe8f5;border-bottom:1px solid #a9c0dc;box-sizing:border-box;border-right:1px solid #a9c0dc"></div>
<div class="t g" style="left:357px;top:235.0px;height:14px;line-height:14px;">P23240005</div>
<div class="t g" style="left:437px;top:235.0px;height:14px;line-height:14px;">Atelier Gen 2023S24</div>
<div class="t g" style="left:566px;top:235.0px;height:14px;line-height:14px;">PVC</div>
<svg class="r" style="left:646px;top:235px" width="13" height="13" viewBox="0 0 13 13"><rect x="0.5" y="0.5" width="12" height="12" fill="#fff" stroke="#333" stroke-width="1"/></svg>
<svg class="r" style="left:715px;top:235px" width="13" height="13" viewBox="0 0 13 13"><rect x="0.5" y="0.5" width="12" height="12" fill="#fff" stroke="#333" stroke-width="1"/></svg>
<svg class="r" style="left:784px;top:235px" width="13" height="13" viewBox="0 0 13 13"><rect x="0.5" y="0.5" width="12" height="12" fill="#fff" stroke="#333" stroke-width="1"/><path d="M3 6.3 L5.5 9 L10.3 3.6" stroke="#3c3c3c" stroke-width="1.5" fill="none"/></svg>
<div class="t g" style="left:502px;width:400px;text-align:right;top:235.0px;height:14px;line-height:14px;">3</div>
<div class="t g" style="left:583px;width:400px;text-align:right;top:235.0px;height:14px;line-height:14px;">3</div>
<div class="t g" style="left:664px;width:400px;text-align:right;top:235.0px;height:14px;line-height:14px;">0,00</div>
<div class="t g" style="left:1078px;top:235.0px;height:14px;line-height:14px;">13/0</div>
<div class="r" style="left:353px;top:250px;width:746px;height:16px;background:#f0f0f0"></div>
<div class="r" style="left:321px;top:250px;width:33px;height:16px;background:#dfe8f5;border-bottom:1px solid #a9c0dc;box-sizing:border-box;border-right:1px solid #a9c0dc"></div>
<div class="t g" style="left:357px;top:251.0px;height:14px;line-height:14px;">P23240006</div>
<div class="t g" style="left:437px;top:251.0px;height:14px;line-height:14px;">Atelier Gen 2023S24</div>
<div class="t g" style="left:566px;top:251.0px;height:14px;line-height:14px;">PVC</div>
<svg class="r" style="left:646px;top:251px" width="13" height="13" viewBox="0 0 13 13"><rect x="0.5" y="0.5" width="12" height="12" fill="#fff" stroke="#333" stroke-width="1"/></svg>
<svg class="r" style="left:715px;top:251px" width="13" height="13" viewBox="0 0 13 13"><rect x="0.5" y="0.5" width="12" height="12" fill="#fff" stroke="#333" stroke-width="1"/></svg>
<svg class="r" style="left:784px;top:251px" width="13" height="13" viewBox="0 0 13 13"><rect x="0.5" y="0.5" width="12" height="12" fill="#fff" stroke="#333" stroke-width="1"/><path d="M3 6.3 L5.5 9 L10.3 3.6" stroke="#3c3c3c" stroke-width="1.5" fill="none"/></svg>
<div class="t g" style="left:502px;width:400px;text-align:right;top:251.0px;height:14px;line-height:14px;">3</div>
<div class="t g" style="left:583px;width:400px;text-align:right;top:251.0px;height:14px;line-height:14px;">3</div>
<div class="t g" style="left:664px;width:400px;text-align:right;top:251.0px;height:14px;line-height:14px;">0,00</div>
<div class="t g" style="left:1078px;top:251.0px;height:14px;line-height:14px;">24/0</div>
<div class="r" style="left:353px;top:266px;width:746px;height:16px;background:#ffffff"></div>
<div class="r" style="left:321px;top:266px;width:33px;height:16px;background:#dfe8f5;border-bottom:1px solid #a9c0dc;box-sizing:border-box;border-right:1px solid #a9c0dc"></div>
<div class="t g" style="left:357px;top:267.0px;height:14px;line-height:14px;">P23260001</div>
<div class="t g" style="left:437px;top:267.0px;height:14px;line-height:14px;">Atelier Gen 2023S26</div>
<div class="t g" style="left:566px;top:267.0px;height:14px;line-height:14px;">PVC</div>
<svg class="r" style="left:646px;top:267px" width="13" height="13" viewBox="0 0 13 13"><rect x="0.5" y="0.5" width="12" height="12" fill="#fff" stroke="#333" stroke-width="1"/></svg>
<svg class="r" style="left:715px;top:267px" width="13" height="13" viewBox="0 0 13 13"><rect x="0.5" y="0.5" width="12" height="12" fill="#fff" stroke="#333" stroke-width="1"/></svg>
<svg class="r" style="left:784px;top:267px" width="13" height="13" viewBox="0 0 13 13"><rect x="0.5" y="0.5" width="12" height="12" fill="#fff" stroke="#333" stroke-width="1"/></svg>
<div class="t g" style="left:502px;width:400px;text-align:right;top:267.0px;height:14px;line-height:14px;">7</div>
<div class="t g" style="left:583px;width:400px;text-align:right;top:267.0px;height:14px;line-height:14px;">0</div>
<div class="t g" style="left:664px;width:400px;text-align:right;top:267.0px;height:14px;line-height:14px;">7,00</div>
<div class="t g" style="left:1078px;top:267.0px;height:14px;line-height:14px;">24/0</div>
<div class="r" style="left:353px;top:282px;width:746px;height:16px;background:#f0f0f0"></div>
<div class="r" style="left:321px;top:282px;width:33px;height:16px;background:#dfe8f5;border-bottom:1px solid #a9c0dc;box-sizing:border-box;border-right:1px solid #a9c0dc"></div>
<div class="t g" style="left:357px;top:283.0px;height:14px;line-height:14px;">P2329000</div>
<svg class="r" style="left:646px;top:283px" width="13" height="13" viewBox="0 0 13 13"><rect x="0.5" y="0.5" width="12" height="12" fill="#fff" stroke="#333" stroke-width="1"/></svg>
<svg class="r" style="left:715px;top:283px" width="13" height="13" viewBox="0 0 13 13"><rect x="0.5" y="0.5" width="12" height="12" fill="#fff" stroke="#333" stroke-width="1"/></svg>
<svg class="r" style="left:784px;top:283px" width="13" height="13" viewBox="0 0 13 13"><rect x="0.5" y="0.5" width="12" height="12" fill="#fff" stroke="#333" stroke-width="1"/><path d="M3 6.3 L5.5 9 L10.3 3.6" stroke="#3c3c3c" stroke-width="1.5" fill="none"/></svg>
<div class="t g" style="left:502px;width:400px;text-align:right;top:283.0px;height:14px;line-height:14px;">1</div>
<div class="t g" style="left:583px;width:400px;text-align:right;top:283.0px;height:14px;line-height:14px;">1</div>
<div class="t g" style="left:664px;width:400px;text-align:right;top:283.0px;height:14px;line-height:14px;">0,00</div>
<div class="t g" style="left:1078px;top:283.0px;height:14px;line-height:14px;">01/0</div>
<div class="r" style="left:353px;top:298px;width:746px;height:16px;background:#ffffff"></div>
<div class="r" style="left:321px;top:298px;width:33px;height:16px;background:#dfe8f5;border-bottom:1px solid #a9c0dc;box-sizing:border-box;border-right:1px solid #a9c0dc"></div>
<div class="t g" style="left:357px;top:299.0px;height:14px;line-height:14px;">P2330000</div>
<svg class="r" style="left:646px;top:299px" width="13" height="13" viewBox="0 0 13 13"><rect x="0.5" y="0.5" width="12" height="12" fill="#fff" stroke="#333" stroke-width="1"/></svg>
<svg class="r" style="left:715px;top:299px" width="13" height="13" viewBox="0 0 13 13"><rect x="0.5" y="0.5" width="12" height="12" fill="#fff" stroke="#333" stroke-width="1"/></svg>
<svg class="r" style="left:784px;top:299px" width="13" height="13" viewBox="0 0 13 13"><rect x="0.5" y="0.5" width="12" height="12" fill="#fff" stroke="#333" stroke-width="1"/></svg>
<div class="t g" style="left:502px;width:400px;text-align:right;top:299.0px;height:14px;line-height:14px;">2</div>
<div class="t g" style="left:583px;width:400px;text-align:right;top:299.0px;height:14px;line-height:14px;">0</div>
<div class="t g" style="left:664px;width:400px;text-align:right;top:299.0px;height:14px;line-height:14px;">2,00</div>
<div class="t g" style="left:1078px;top:299.0px;height:14px;line-height:14px;">22/0</div>
<div class="r" style="left:353px;top:314px;width:746px;height:16px;background:#f0f0f0"></div>
<div class="r" style="left:321px;top:314px;width:33px;height:16px;background:#dfe8f5;border-bottom:1px solid #a9c0dc;box-sizing:border-box;border-right:1px solid #a9c0dc"></div>
<div class="t g" style="left:357px;top:315.0px;height:14px;line-height:14px;">P2331000</div>
<svg class="r" style="left:646px;top:315px" width="13" height="13" viewBox="0 0 13 13"><rect x="0.5" y="0.5" width="12" height="12" fill="#fff" stroke="#333" stroke-width="1"/></svg>
<svg class="r" style="left:715px;top:315px" width="13" height="13" viewBox="0 0 13 13"><rect x="0.5" y="0.5" width="12" height="12" fill="#fff" stroke="#333" stroke-width="1"/></svg>
<svg class="r" style="left:784px;top:315px" width="13" height="13" viewBox="0 0 13 13"><rect x="0.5" y="0.5" width="12" height="12" fill="#fff" stroke="#333" stroke-width="1"/><path d="M3 6.3 L5.5 9 L10.3 3.6" stroke="#3c3c3c" stroke-width="1.5" fill="none"/></svg>
<div class="t g" style="left:502px;width:400px;text-align:right;top:315.0px;height:14px;line-height:14px;">1</div>
<div class="t g" style="left:583px;width:400px;text-align:right;top:315.0px;height:14px;line-height:14px;">1</div>
<div class="t g" style="left:664px;width:400px;text-align:right;top:315.0px;height:14px;line-height:14px;">0,00</div>
<div class="t g" style="left:1078px;top:315.0px;height:14px;line-height:14px;">15/0</div>
<div class="r" style="left:353px;top:330px;width:746px;height:16px;background:#ffffff"></div>
<div class="r" style="left:321px;top:330px;width:33px;height:16px;background:#dfe8f5;border-bottom:1px solid #a9c0dc;box-sizing:border-box;border-right:1px solid #a9c0dc"></div>
<div class="t g" style="left:357px;top:331.0px;height:14px;line-height:14px;">P2331000</div>
<svg class="r" style="left:646px;top:331px" width="13" height="13" viewBox="0 0 13 13"><rect x="0.5" y="0.5" width="12" height="12" fill="#fff" stroke="#333" stroke-width="1"/></svg>
<svg class="r" style="left:715px;top:331px" width="13" height="13" viewBox="0 0 13 13"><rect x="0.5" y="0.5" width="12" height="12" fill="#fff" stroke="#333" stroke-width="1"/></svg>
<svg class="r" style="left:784px;top:331px" width="13" height="13" viewBox="0 0 13 13"><rect x="0.5" y="0.5" width="12" height="12" fill="#fff" stroke="#333" stroke-width="1"/><path d="M3 6.3 L5.5 9 L10.3 3.6" stroke="#3c3c3c" stroke-width="1.5" fill="none"/></svg>
<div class="t g" style="left:502px;width:400px;text-align:right;top:331.0px;height:14px;line-height:14px;">1</div>
<div class="t g" style="left:583px;width:400px;text-align:right;top:331.0px;height:14px;line-height:14px;">1</div>
<div class="t g" style="left:664px;width:400px;text-align:right;top:331.0px;height:14px;line-height:14px;">0,00</div>
<div class="t g" style="left:1078px;top:331.0px;height:14px;line-height:14px;">16/0</div>
<div class="r" style="left:353px;top:346px;width:746px;height:16px;background:#f0f0f0"></div>
<div class="r" style="left:321px;top:346px;width:33px;height:16px;background:#dfe8f5;border-bottom:1px solid #a9c0dc;box-sizing:border-box;border-right:1px solid #a9c0dc"></div>
<div class="t g" style="left:357px;top:347.0px;height:14px;line-height:14px;">P2331000</div>
<svg class="r" style="left:646px;top:347px" width="13" height="13" viewBox="0 0 13 13"><rect x="0.5" y="0.5" width="12" height="12" fill="#fff" stroke="#333" stroke-width="1"/></svg>
<svg class="r" style="left:715px;top:347px" width="13" height="13" viewBox="0 0 13 13"><rect x="0.5" y="0.5" width="12" height="12" fill="#fff" stroke="#333" stroke-width="1"/></svg>
<svg class="r" style="left:784px;top:347px" width="13" height="13" viewBox="0 0 13 13"><rect x="0.5" y="0.5" width="12" height="12" fill="#fff" stroke="#333" stroke-width="1"/><path d="M3 6.3 L5.5 9 L10.3 3.6" stroke="#3c3c3c" stroke-width="1.5" fill="none"/></svg>
<div class="t g" style="left:502px;width:400px;text-align:right;top:347.0px;height:14px;line-height:14px;">3</div>
<div class="t g" style="left:583px;width:400px;text-align:right;top:347.0px;height:14px;line-height:14px;">3</div>
<div class="t g" style="left:664px;width:400px;text-align:right;top:347.0px;height:14px;line-height:14px;">0,00</div>
<div class="t g" style="left:1078px;top:347.0px;height:14px;line-height:14px;">21/0</div>
<div class="r" style="left:353px;top:362px;width:746px;height:16px;background:#ffffff"></div>
<div class="r" style="left:321px;top:362px;width:33px;height:16px;background:#dfe8f5;border-bottom:1px solid #a9c0dc;box-sizing:border-box;border-right:1px solid #a9c0dc"></div>
<div class="t g" style="left:357px;top:363.0px;height:14px;line-height:14px;">P2331000</div>
<svg class="r" style="left:646px;top:363px" width="13" height="13" viewBox="0 0 13 13"><rect x="0.5" y="0.5" width="12" height="12" fill="#fff" stroke="#333" stroke-width="1"/></svg>
<svg class="r" style="left:715px;top:363px" width="13" height="13" viewBox="0 0 13 13"><rect x="0.5" y="0.5" width="12" height="12" fill="#fff" stroke="#333" stroke-width="1"/></svg>
<svg class="r" style="left:784px;top:363px" width="13" height="13" viewBox="0 0 13 13"><rect x="0.5" y="0.5" width="12" height="12" fill="#fff" stroke="#333" stroke-width="1"/><path d="M3 6.3 L5.5 9 L10.3 3.6" stroke="#3c3c3c" stroke-width="1.5" fill="none"/></svg>
<div class="t g" style="left:502px;width:400px;text-align:right;top:363.0px;height:14px;line-height:14px;">1</div>
<div class="t g" style="left:583px;width:400px;text-align:right;top:363.0px;height:14px;line-height:14px;">1</div>
<div class="t g" style="left:664px;width:400px;text-align:right;top:363.0px;height:14px;line-height:14px;">0,00</div>
<div class="t g" style="left:1078px;top:363.0px;height:14px;line-height:14px;">28/0</div>
<div class="r" style="left:353px;top:378px;width:746px;height:16px;background:#f0f0f0"></div>
<div class="r" style="left:321px;top:378px;width:33px;height:16px;background:#dfe8f5;border-bottom:1px solid #a9c0dc;box-sizing:border-box;border-right:1px solid #a9c0dc"></div>
<div class="t g" style="left:357px;top:379.0px;height:14px;line-height:14px;">P2331000</div>
<svg class="r" style="left:646px;top:379px" width="13" height="13" viewBox="0 0 13 13"><rect x="0.5" y="0.5" width="12" height="12" fill="#fff" stroke="#333" stroke-width="1"/></svg>
<svg class="r" style="left:715px;top:379px" width="13" height="13" viewBox="0 0 13 13"><rect x="0.5" y="0.5" width="12" height="12" fill="#fff" stroke="#333" stroke-width="1"/></svg>
<svg class="r" style="left:784px;top:379px" width="13" height="13" viewBox="0 0 13 13"><rect x="0.5" y="0.5" width="12" height="12" fill="#fff" stroke="#333" stroke-width="1"/></svg>
<div class="t g" style="left:502px;width:400px;text-align:right;top:379.0px;height:14px;line-height:14px;">1</div>
<div class="t g" style="left:583px;width:400px;text-align:right;top:379.0px;height:14px;line-height:14px;">0</div>
<div class="t g" style="left:664px;width:400px;text-align:right;top:379.0px;height:14px;line-height:14px;">1,00</div>
<div class="t g" style="left:1078px;top:379.0px;height:14px;line-height:14px;">29/0</div>
<div class="r" style="left:353px;top:394px;width:746px;height:16px;background:#ffffff"></div>
<div class="r" style="left:321px;top:394px;width:33px;height:16px;background:#dfe8f5;border-bottom:1px solid #a9c0dc;box-sizing:border-box;border-right:1px solid #a9c0dc"></div>
<div class="t g" style="left:357px;top:395.0px;height:14px;line-height:14px;">P2332000</div>
<svg class="r" style="left:646px;top:395px" width="13" height="13" viewBox="0 0 13 13"><rect x="0.5" y="0.5" width="12" height="12" fill="#fff" stroke="#333" stroke-width="1"/></svg>
<svg class="r" style="left:715px;top:395px" width="13" height="13" viewBox="0 0 13 13"><rect x="0.5" y="0.5" width="12" height="12" fill="#fff" stroke="#333" stroke-width="1"/></svg>
<svg class="r" style="left:784px;top:395px" width="13" height="13" viewBox="0 0 13 13"><rect x="0.5" y="0.5" width="12" height="12" fill="#fff" stroke="#333" stroke-width="1"/><path d="M3 6.3 L5.5 9 L10.3 3.6" stroke="#3c3c3c" stroke-width="1.5" fill="none"/></svg>
<div class="t g" style="left:502px;width:400px;text-align:right;top:395.0px;height:14px;line-height:14px;">3</div>
<div class="t g" style="left:583px;width:400px;text-align:right;top:395.0px;height:14px;line-height:14px;">2</div>
<div class="t g" style="left:664px;width:400px;text-align:right;top:395.0px;height:14px;line-height:14px;">1,00</div>
<div class="t g" style="left:1078px;top:395.0px;height:14px;line-height:14px;">05/0</div>
<div class="r" style="left:353px;top:410px;width:746px;height:16px;background:#f0f0f0"></div>
<div class="r" style="left:321px;top:410px;width:33px;height:16px;background:#dfe8f5;border-bottom:1px solid #a9c0dc;box-sizing:border-box;border-right:1px solid #a9c0dc"></div>
<div class="t g" style="left:357px;top:411.0px;height:14px;line-height:14px;">P2332000</div>
<svg class="r" style="left:646px;top:411px" width="13" height="13" viewBox="0 0 13 13"><rect x="0.5" y="0.5" width="12" height="12" fill="#fff" stroke="#333" stroke-width="1"/></svg>
<svg class="r" style="left:715px;top:411px" width="13" height="13" viewBox="0 0 13 13"><rect x="0.5" y="0.5" width="12" height="12" fill="#fff" stroke="#333" stroke-width="1"/></svg>
<svg class="r" style="left:784px;top:411px" width="13" height="13" viewBox="0 0 13 13"><rect x="0.5" y="0.5" width="12" height="12" fill="#fff" stroke="#333" stroke-width="1"/></svg>
<div class="t g" style="left:502px;width:400px;text-align:right;top:411.0px;height:14px;line-height:14px;">1</div>
<div class="t g" style="left:583px;width:400px;text-align:right;top:411.0px;height:14px;line-height:14px;">0</div>
<div class="t g" style="left:664px;width:400px;text-align:right;top:411.0px;height:14px;line-height:14px;">1,00</div>
<div class="t g" style="left:1078px;top:411.0px;height:14px;line-height:14px;">06/0</div>
<div class="r" style="left:353px;top:426px;width:746px;height:16px;background:#ffffff"></div>
<div class="r" style="left:321px;top:426px;width:33px;height:16px;background:#dfe8f5;border-bottom:1px solid #a9c0dc;box-sizing:border-box;border-right:1px solid #a9c0dc"></div>
<div class="t g" style="left:357px;top:427.0px;height:14px;line-height:14px;">P2332000</div>
<svg class="r" style="left:646px;top:427px" width="13" height="13" viewBox="0 0 13 13"><rect x="0.5" y="0.5" width="12" height="12" fill="#fff" stroke="#333" stroke-width="1"/></svg>
<svg class="r" style="left:715px;top:427px" width="13" height="13" viewBox="0 0 13 13"><rect x="0.5" y="0.5" width="12" height="12" fill="#fff" stroke="#333" stroke-width="1"/></svg>
<svg class="r" style="left:784px;top:427px" width="13" height="13" viewBox="0 0 13 13"><rect x="0.5" y="0.5" width="12" height="12" fill="#fff" stroke="#333" stroke-width="1"/><path d="M3 6.3 L5.5 9 L10.3 3.6" stroke="#3c3c3c" stroke-width="1.5" fill="none"/></svg>
<div class="t g" style="left:502px;width:400px;text-align:right;top:427.0px;height:14px;line-height:14px;">1</div>
<div class="t g" style="left:583px;width:400px;text-align:right;top:427.0px;height:14px;line-height:14px;">1</div>
<div class="t g" style="left:664px;width:400px;text-align:right;top:427.0px;height:14px;line-height:14px;">0,00</div>
<div class="t g" style="left:1078px;top:427.0px;height:14px;line-height:14px;">11/0</div>
<div class="r" style="left:353px;top:442px;width:746px;height:16px;background:#f0f0f0"></div>
<div class="r" style="left:321px;top:442px;width:33px;height:16px;background:#dfe8f5;border-bottom:1px solid #a9c0dc;box-sizing:border-box;border-right:1px solid #a9c0dc"></div>
<div class="t g" style="left:357px;top:443.0px;height:14px;line-height:14px;">P2333000</div>
<svg class="r" style="left:646px;top:443px" width="13" height="13" viewBox="0 0 13 13"><rect x="0.5" y="0.5" width="12" height="12" fill="#fff" stroke="#333" stroke-width="1"/></svg>
<svg class="r" style="left:715px;top:443px" width="13" height="13" viewBox="0 0 13 13"><rect x="0.5" y="0.5" width="12" height="12" fill="#fff" stroke="#333" stroke-width="1"/></svg>
<svg class="r" style="left:784px;top:443px" width="13" height="13" viewBox="0 0 13 13"><rect x="0.5" y="0.5" width="12" height="12" fill="#fff" stroke="#333" stroke-width="1"/><path d="M3 6.3 L5.5 9 L10.3 3.6" stroke="#3c3c3c" stroke-width="1.5" fill="none"/></svg>
<div class="t g" style="left:502px;width:400px;text-align:right;top:443.0px;height:14px;line-height:14px;">3</div>
<div class="t g" style="left:583px;width:400px;text-align:right;top:443.0px;height:14px;line-height:14px;">0</div>
<div class="t g" style="left:664px;width:400px;text-align:right;top:443.0px;height:14px;line-height:14px;">3,00</div>
<div class="t g" style="left:1078px;top:443.0px;height:14px;line-height:14px;">11/0</div>
<div class="r" style="left:353px;top:458px;width:746px;height:16px;background:#ffffff"></div>
<div class="r" style="left:321px;top:458px;width:33px;height:16px;background:#dfe8f5;border-bottom:1px solid #a9c0dc;box-sizing:border-box;border-right:1px solid #a9c0dc"></div>
<div class="t g" style="left:357px;top:459.0px;height:14px;line-height:14px;">P2334000</div>
<svg class="r" style="left:646px;top:459px" width="13" height="13" viewBox="0 0 13 13"><rect x="0.5" y="0.5" width="12" height="12" fill="#fff" stroke="#333" stroke-width="1"/></svg>
<svg class="r" style="left:715px;top:459px" width="13" height="13" viewBox="0 0 13 13"><rect x="0.5" y="0.5" width="12" height="12" fill="#fff" stroke="#333" stroke-width="1"/></svg>
<svg class="r" style="left:784px;top:459px" width="13" height="13" viewBox="0 0 13 13"><rect x="0.5" y="0.5" width="12" height="12" fill="#fff" stroke="#333" stroke-width="1"/><path d="M3 6.3 L5.5 9 L10.3 3.6" stroke="#3c3c3c" stroke-width="1.5" fill="none"/></svg>
<div class="t g" style="left:502px;width:400px;text-align:right;top:459.0px;height:14px;line-height:14px;">3</div>
<div class="t g" style="left:583px;width:400px;text-align:right;top:459.0px;height:14px;line-height:14px;">3</div>
<div class="t g" style="left:664px;width:400px;text-align:right;top:459.0px;height:14px;line-height:14px;">0,00</div>
<div class="t g" style="left:1078px;top:459.0px;height:14px;line-height:14px;">12/0</div>
<div class="r" style="left:353px;top:474px;width:746px;height:16px;background:#f0f0f0"></div>
<div class="r" style="left:321px;top:474px;width:33px;height:16px;background:#dfe8f5;border-bottom:1px solid #a9c0dc;box-sizing:border-box;border-right:1px solid #a9c0dc"></div>
<div class="t g" style="left:357px;top:475.0px;height:14px;line-height:14px;">P2334000</div>
<svg class="r" style="left:646px;top:475px" width="13" height="13" viewBox="0 0 13 13"><rect x="0.5" y="0.5" width="12" height="12" fill="#fff" stroke="#333" stroke-width="1"/></svg>
<svg class="r" style="left:715px;top:475px" width="13" height="13" viewBox="0 0 13 13"><rect x="0.5" y="0.5" width="12" height="12" fill="#fff" stroke="#333" stroke-width="1"/></svg>
<svg class="r" style="left:784px;top:475px" width="13" height="13" viewBox="0 0 13 13"><rect x="0.5" y="0.5" width="12" height="12" fill="#fff" stroke="#333" stroke-width="1"/><path d="M3 6.3 L5.5 9 L10.3 3.6" stroke="#3c3c3c" stroke-width="1.5" fill="none"/></svg>
<div class="t g" style="left:502px;width:400px;text-align:right;top:475.0px;height:14px;line-height:14px;">1</div>
<div class="t g" style="left:583px;width:400px;text-align:right;top:475.0px;height:14px;line-height:14px;">1</div>
<div class="t g" style="left:664px;width:400px;text-align:right;top:475.0px;height:14px;line-height:14px;">0,00</div>
<div class="t g" style="left:1078px;top:475.0px;height:14px;line-height:14px;">12/0</div>
<div class="r" style="left:353px;top:490px;width:746px;height:16px;background:#ffffff"></div>
<div class="r" style="left:321px;top:490px;width:33px;height:16px;background:#dfe8f5;border-bottom:1px solid #a9c0dc;box-sizing:border-box;border-right:1px solid #a9c0dc"></div>
<div class="t g" style="left:357px;top:491.0px;height:14px;line-height:14px;">P2334000</div>
<svg class="r" style="left:646px;top:491px" width="13" height="13" viewBox="0 0 13 13"><rect x="0.5" y="0.5" width="12" height="12" fill="#fff" stroke="#333" stroke-width="1"/></svg>
<svg class="r" style="left:715px;top:491px" width="13" height="13" viewBox="0 0 13 13"><rect x="0.5" y="0.5" width="12" height="12" fill="#fff" stroke="#333" stroke-width="1"/></svg>
<svg class="r" style="left:784px;top:491px" width="13" height="13" viewBox="0 0 13 13"><rect x="0.5" y="0.5" width="12" height="12" fill="#fff" stroke="#333" stroke-width="1"/><path d="M3 6.3 L5.5 9 L10.3 3.6" stroke="#3c3c3c" stroke-width="1.5" fill="none"/></svg>
<div class="t g" style="left:502px;width:400px;text-align:right;top:491.0px;height:14px;line-height:14px;">1</div>
<div class="t g" style="left:583px;width:400px;text-align:right;top:491.0px;height:14px;line-height:14px;">1</div>
<div class="t g" style="left:664px;width:400px;text-align:right;top:491.0px;height:14px;line-height:14px;">0,00</div>
<div class="t g" style="left:1078px;top:491.0px;height:14px;line-height:14px;">12/0</div>
<div class="r" style="left:353px;top:506px;width:746px;height:16px;background:#f0f0f0"></div>
<div class="r" style="left:321px;top:506px;width:33px;height:16px;background:#dfe8f5;border-bottom:1px solid #a9c0dc;box-sizing:border-box;border-right:1px solid #a9c0dc"></div>
<div class="t g" style="left:357px;top:507.0px;height:14px;line-height:14px;">P2334000</div>
<svg class="r" style="left:646px;top:507px" width="13" height="13" viewBox="0 0 13 13"><rect x="0.5" y="0.5" width="12" height="12" fill="#fff" stroke="#333" stroke-width="1"/></svg>
<svg class="r" style="left:715px;top:507px" width="13" height="13" viewBox="0 0 13 13"><rect x="0.5" y="0.5" width="12" height="12" fill="#fff" stroke="#333" stroke-width="1"/></svg>
<svg class="r" style="left:784px;top:507px" width="13" height="13" viewBox="0 0 13 13"><rect x="0.5" y="0.5" width="12" height="12" fill="#fff" stroke="#333" stroke-width="1"/><path d="M3 6.3 L5.5 9 L10.3 3.6" stroke="#3c3c3c" stroke-width="1.5" fill="none"/></svg>
<div class="t g" style="left:502px;width:400px;text-align:right;top:507.0px;height:14px;line-height:14px;">5</div>
<div class="t g" style="left:583px;width:400px;text-align:right;top:507.0px;height:14px;line-height:14px;">5</div>
<div class="t g" style="left:664px;width:400px;text-align:right;top:507.0px;height:14px;line-height:14px;">0,00</div>
<div class="t g" style="left:1078px;top:507.0px;height:14px;line-height:14px;">13/0</div>
<div class="r" style="left:353px;top:522px;width:746px;height:16px;background:#ffffff"></div>
<div class="r" style="left:321px;top:522px;width:33px;height:16px;background:#dfe8f5;border-bottom:1px solid #a9c0dc;box-sizing:border-box;border-right:1px solid #a9c0dc"></div>
<div class="t g" style="left:357px;top:523.0px;height:14px;line-height:14px;">P2334000</div>
<svg class="r" style="left:646px;top:523px" width="13" height="13" viewBox="0 0 13 13"><rect x="0.5" y="0.5" width="12" height="12" fill="#fff" stroke="#333" stroke-width="1"/></svg>
<svg class="r" style="left:715px;top:523px" width="13" height="13" viewBox="0 0 13 13"><rect x="0.5" y="0.5" width="12" height="12" fill="#fff" stroke="#333" stroke-width="1"/></svg>
<svg class="r" style="left:784px;top:523px" width="13" height="13" viewBox="0 0 13 13"><rect x="0.5" y="0.5" width="12" height="12" fill="#fff" stroke="#333" stroke-width="1"/><path d="M3 6.3 L5.5 9 L10.3 3.6" stroke="#3c3c3c" stroke-width="1.5" fill="none"/></svg>
<div class="t g" style="left:502px;width:400px;text-align:right;top:523.0px;height:14px;line-height:14px;">4</div>
<div class="t g" style="left:583px;width:400px;text-align:right;top:523.0px;height:14px;line-height:14px;">4</div>
<div class="t g" style="left:664px;width:400px;text-align:right;top:523.0px;height:14px;line-height:14px;">0,00</div>
<div class="t g" style="left:1078px;top:523.0px;height:14px;line-height:14px;">13/0</div>
<div class="r" style="left:353px;top:538px;width:746px;height:16px;background:#f0f0f0"></div>
<div class="r" style="left:321px;top:538px;width:33px;height:16px;background:#dfe8f5;border-bottom:1px solid #a9c0dc;box-sizing:border-box;border-right:1px solid #a9c0dc"></div>
<div class="t g" style="left:357px;top:539.0px;height:14px;line-height:14px;">P2334000</div>
<svg class="r" style="left:646px;top:539px" width="13" height="13" viewBox="0 0 13 13"><rect x="0.5" y="0.5" width="12" height="12" fill="#fff" stroke="#333" stroke-width="1"/></svg>
<svg class="r" style="left:715px;top:539px" width="13" height="13" viewBox="0 0 13 13"><rect x="0.5" y="0.5" width="12" height="12" fill="#fff" stroke="#333" stroke-width="1"/></svg>
<svg class="r" style="left:784px;top:539px" width="13" height="13" viewBox="0 0 13 13"><rect x="0.5" y="0.5" width="12" height="12" fill="#fff" stroke="#333" stroke-width="1"/><path d="M3 6.3 L5.5 9 L10.3 3.6" stroke="#3c3c3c" stroke-width="1.5" fill="none"/></svg>
<div class="t g" style="left:502px;width:400px;text-align:right;top:539.0px;height:14px;line-height:14px;">1</div>
<div class="t g" style="left:583px;width:400px;text-align:right;top:539.0px;height:14px;line-height:14px;">1</div>
<div class="t g" style="left:664px;width:400px;text-align:right;top:539.0px;height:14px;line-height:14px;">0,00</div>
<div class="t g" style="left:1078px;top:539.0px;height:14px;line-height:14px;">18/0</div>
<div class="r" style="left:353px;top:554px;width:746px;height:16px;background:#ffffff"></div>
<div class="r" style="left:321px;top:554px;width:33px;height:16px;background:#dfe8f5;border-bottom:1px solid #a9c0dc;box-sizing:border-box;border-right:1px solid #a9c0dc"></div>
<div class="t g" style="left:357px;top:555.0px;height:14px;line-height:14px;">P2334000</div>
<svg class="r" style="left:646px;top:555px" width="13" height="13" viewBox="0 0 13 13"><rect x="0.5" y="0.5" width="12" height="12" fill="#fff" stroke="#333" stroke-width="1"/></svg>
<svg class="r" style="left:715px;top:555px" width="13" height="13" viewBox="0 0 13 13"><rect x="0.5" y="0.5" width="12" height="12" fill="#fff" stroke="#333" stroke-width="1"/></svg>
<svg class="r" style="left:784px;top:555px" width="13" height="13" viewBox="0 0 13 13"><rect x="0.5" y="0.5" width="12" height="12" fill="#fff" stroke="#333" stroke-width="1"/><path d="M3 6.3 L5.5 9 L10.3 3.6" stroke="#3c3c3c" stroke-width="1.5" fill="none"/></svg>
<div class="t g" style="left:502px;width:400px;text-align:right;top:555.0px;height:14px;line-height:14px;">1</div>
<div class="t g" style="left:583px;width:400px;text-align:right;top:555.0px;height:14px;line-height:14px;">1</div>
<div class="t g" style="left:664px;width:400px;text-align:right;top:555.0px;height:14px;line-height:14px;">0,00</div>
<div class="t g" style="left:1078px;top:555.0px;height:14px;line-height:14px;">18/0</div>
<div class="r" style="left:353px;top:570px;width:746px;height:16px;background:#f0f0f0"></div>
<div class="r" style="left:321px;top:570px;width:33px;height:16px;background:#dfe8f5;border-bottom:1px solid #a9c0dc;box-sizing:border-box;border-right:1px solid #a9c0dc"></div>
<div class="t g" style="left:357px;top:571.0px;height:14px;line-height:14px;">P2334000</div>
<svg class="r" style="left:646px;top:571px" width="13" height="13" viewBox="0 0 13 13"><rect x="0.5" y="0.5" width="12" height="12" fill="#fff" stroke="#333" stroke-width="1"/></svg>
<svg class="r" style="left:715px;top:571px" width="13" height="13" viewBox="0 0 13 13"><rect x="0.5" y="0.5" width="12" height="12" fill="#fff" stroke="#333" stroke-width="1"/></svg>
<svg class="r" style="left:784px;top:571px" width="13" height="13" viewBox="0 0 13 13"><rect x="0.5" y="0.5" width="12" height="12" fill="#fff" stroke="#333" stroke-width="1"/><path d="M3 6.3 L5.5 9 L10.3 3.6" stroke="#3c3c3c" stroke-width="1.5" fill="none"/></svg>
<div class="t g" style="left:502px;width:400px;text-align:right;top:571.0px;height:14px;line-height:14px;">1</div>
<div class="t g" style="left:583px;width:400px;text-align:right;top:571.0px;height:14px;line-height:14px;">1</div>
<div class="t g" style="left:664px;width:400px;text-align:right;top:571.0px;height:14px;line-height:14px;">0,00</div>
<div class="t g" style="left:1078px;top:571.0px;height:14px;line-height:14px;">18/0</div>
<div class="r" style="left:353px;top:586px;width:746px;height:16px;background:#ffffff"></div>
<div class="r" style="left:321px;top:586px;width:33px;height:16px;background:#dfe8f5;border-bottom:1px solid #a9c0dc;box-sizing:border-box;border-right:1px solid #a9c0dc"></div>
<div class="t g" style="left:357px;top:587.0px;height:14px;line-height:14px;">P2334001</div>
<svg class="r" style="left:646px;top:587px" width="13" height="13" viewBox="0 0 13 13"><rect x="0.5" y="0.5" width="12" height="12" fill="#fff" stroke="#333" stroke-width="1"/></svg>
<svg class="r" style="left:715px;top:587px" width="13" height="13" viewBox="0 0 13 13"><rect x="0.5" y="0.5" width="12" height="12" fill="#fff" stroke="#333" stroke-width="1"/></svg>
<svg class="r" style="left:784px;top:587px" width="13" height="13" viewBox="0 0 13 13"><rect x="0.5" y="0.5" width="12" height="12" fill="#fff" stroke="#333" stroke-width="1"/><path d="M3 6.3 L5.5 9 L10.3 3.6" stroke="#3c3c3c" stroke-width="1.5" fill="none"/></svg>
<div class="t g" style="left:502px;width:400px;text-align:right;top:587.0px;height:14px;line-height:14px;">1</div>
<div class="t g" style="left:583px;width:400px;text-align:right;top:587.0px;height:14px;line-height:14px;">1</div>
<div class="t g" style="left:664px;width:400px;text-align:right;top:587.0px;height:14px;line-height:14px;">0,00</div>
<div class="t g" style="left:1078px;top:587.0px;height:14px;line-height:14px;">18/0</div>
<div class="r" style="left:353px;top:602px;width:746px;height:16px;background:#f0f0f0"></div>
<div class="r" style="left:321px;top:602px;width:33px;height:16px;background:#fbc77f;border-bottom:1px solid #a9c0dc;box-sizing:border-box;border-right:1px solid #a9c0dc"></div>
<div class="t g" style="left:357px;top:603.0px;height:14px;line-height:14px;">P2336000</div>
<svg class="r" style="left:646px;top:603px" width="13" height="13" viewBox="0 0 13 13"><rect x="0.5" y="0.5" width="12" height="12" fill="#fff" stroke="#333" stroke-width="1"/></svg>
<svg class="r" style="left:715px;top:603px" width="13" height="13" viewBox="0 0 13 13"><rect x="0.5" y="0.5" width="12" height="12" fill="#fff" stroke="#333" stroke-width="1"/></svg>
<svg class="r" style="left:784px;top:603px" width="13" height="13" viewBox="0 0 13 13"><rect x="0.5" y="0.5" width="12" height="12" fill="#fff" stroke="#333" stroke-width="1"/><path d="M3 6.3 L5.5 9 L10.3 3.6" stroke="#3c3c3c" stroke-width="1.5" fill="none"/></svg>
<div class="t g" style="left:502px;width:400px;text-align:right;top:603.0px;height:14px;line-height:14px;">3</div>
<div class="t g" style="left:583px;width:400px;text-align:right;top:603.0px;height:14px;line-height:14px;">3</div>
<div class="t g" style="left:664px;width:400px;text-align:right;top:603.0px;height:14px;line-height:14px;">0,00</div>
<div class="t g" style="left:1078px;top:603.0px;height:14px;line-height:14px;">01/0</div>
<div class="r" style="left:353px;top:618px;width:746px;height:16px;background:#ffffff"></div>
<div class="r" style="left:321px;top:618px;width:33px;height:16px;background:#dfe8f5;border-bottom:1px solid #a9c0dc;box-sizing:border-box;border-right:1px solid #a9c0dc"></div>
<div class="t g" style="left:357px;top:619.0px;height:14px;line-height:14px;">P2337000</div>
<svg class="r" style="left:646px;top:619px" width="13" height="13" viewBox="0 0 13 13"><rect x="0.5" y="0.5" width="12" height="12" fill="#fff" stroke="#333" stroke-width="1"/></svg>
<svg class="r" style="left:715px;top:619px" width="13" height="13" viewBox="0 0 13 13"><rect x="0.5" y="0.5" width="12" height="12" fill="#fff" stroke="#333" stroke-width="1"/></svg>
<svg class="r" style="left:784px;top:619px" width="13" height="13" viewBox="0 0 13 13"><rect x="0.5" y="0.5" width="12" height="12" fill="#fff" stroke="#333" stroke-width="1"/><path d="M3 6.3 L5.5 9 L10.3 3.6" stroke="#3c3c3c" stroke-width="1.5" fill="none"/></svg>
<div class="t g" style="left:502px;width:400px;text-align:right;top:619.0px;height:14px;line-height:14px;">4</div>
<div class="t g" style="left:583px;width:400px;text-align:right;top:619.0px;height:14px;line-height:14px;">1</div>
<div class="t g" style="left:664px;width:400px;text-align:right;top:619.0px;height:14px;line-height:14px;">3,00</div>
<div class="t g" style="left:1078px;top:619.0px;height:14px;line-height:14px;">07/0</div>
<div class="r" style="left:353px;top:634px;width:746px;height:16px;background:#f0f0f0"></div>
<div class="r" style="left:321px;top:634px;width:33px;height:16px;background:#dfe8f5;border-bottom:1px solid #a9c0dc;box-sizing:border-box;border-right:1px solid #a9c0dc"></div>
<div class="t g" style="left:357px;top:635.0px;height:14px;line-height:14px;">P2338000</div>
<svg class="r" style="left:646px;top:635px" width="13" height="13" viewBox="0 0 13 13"><rect x="0.5" y="0.5" width="12" height="12" fill="#fff" stroke="#333" stroke-width="1"/></svg>
<svg class="r" style="left:715px;top:635px" width="13" height="13" viewBox="0 0 13 13"><rect x="0.5" y="0.5" width="12" height="12" fill="#fff" stroke="#333" stroke-width="1"/></svg>
<svg class="r" style="left:784px;top:635px" width="13" height="13" viewBox="0 0 13 13"><rect x="0.5" y="0.5" width="12" height="12" fill="#fff" stroke="#333" stroke-width="1"/><path d="M3 6.3 L5.5 9 L10.3 3.6" stroke="#3c3c3c" stroke-width="1.5" fill="none"/></svg>
<div class="t g" style="left:502px;width:400px;text-align:right;top:635.0px;height:14px;line-height:14px;">3</div>
<div class="t g" style="left:583px;width:400px;text-align:right;top:635.0px;height:14px;line-height:14px;">3</div>
<div class="t g" style="left:664px;width:400px;text-align:right;top:635.0px;height:14px;line-height:14px;">0,00</div>
<div class="t g" style="left:1078px;top:635.0px;height:14px;line-height:14px;">16/0</div>
<div class="r" style="left:353px;top:650px;width:746px;height:16px;background:#ffffff"></div>
<div class="r" style="left:321px;top:650px;width:33px;height:16px;background:#dfe8f5;border-bottom:1px solid #a9c0dc;box-sizing:border-box;border-right:1px solid #a9c0dc"></div>
<div class="t g" style="left:357px;top:651.0px;height:14px;line-height:14px;">P2338000</div>
<svg class="r" style="left:646px;top:651px" width="13" height="13" viewBox="0 0 13 13"><rect x="0.5" y="0.5" width="12" height="12" fill="#fff" stroke="#333" stroke-width="1"/></svg>
<svg class="r" style="left:715px;top:651px" width="13" height="13" viewBox="0 0 13 13"><rect x="0.5" y="0.5" width="12" height="12" fill="#fff" stroke="#333" stroke-width="1"/></svg>
<svg class="r" style="left:784px;top:651px" width="13" height="13" viewBox="0 0 13 13"><rect x="0.5" y="0.5" width="12" height="12" fill="#fff" stroke="#333" stroke-width="1"/><path d="M3 6.3 L5.5 9 L10.3 3.6" stroke="#3c3c3c" stroke-width="1.5" fill="none"/></svg>
<div class="t g" style="left:502px;width:400px;text-align:right;top:651.0px;height:14px;line-height:14px;">4</div>
<div class="t g" style="left:583px;width:400px;text-align:right;top:651.0px;height:14px;line-height:14px;">4</div>
<div class="t g" style="left:664px;width:400px;text-align:right;top:651.0px;height:14px;line-height:14px;">0,00</div>
<div class="t g" style="left:1078px;top:651.0px;height:14px;line-height:14px;">18/0</div>
<div class="r" style="left:353px;top:666px;width:746px;height:16px;background:#f0f0f0"></div>
<div class="r" style="left:321px;top:666px;width:33px;height:16px;background:#dfe8f5;border-bottom:1px solid #a9c0dc;box-sizing:border-box;border-right:1px solid #a9c0dc"></div>
<div class="t g" style="left:357px;top:667.0px;height:14px;line-height:14px;">P2338000</div>
<svg class="r" style="left:646px;top:667px" width="13" height="13" viewBox="0 0 13 13"><rect x="0.5" y="0.5" width="12" height="12" fill="#fff" stroke="#333" stroke-width="1"/></svg>
<svg class="r" style="left:715px;top:667px" width="13" height="13" viewBox="0 0 13 13"><rect x="0.5" y="0.5" width="12" height="12" fill="#fff" stroke="#333" stroke-width="1"/><path d="M3 6.3 L5.5 9 L10.3 3.6" stroke="#3c3c3c" stroke-width="1.5" fill="none"/></svg>
<svg class="r" style="left:784px;top:667px" width="13" height="13" viewBox="0 0 13 13"><rect x="0.5" y="0.5" width="12" height="12" fill="#fff" stroke="#333" stroke-width="1"/></svg>
<div class="t g" style="left:502px;width:400px;text-align:right;top:667.0px;height:14px;line-height:14px;">4</div>
<div class="t g" style="left:583px;width:400px;text-align:right;top:667.0px;height:14px;line-height:14px;">1</div>
<div class="t g" style="left:664px;width:400px;text-align:right;top:667.0px;height:14px;line-height:14px;">3,00</div>
<div class="t g" style="left:1078px;top:667.0px;height:14px;line-height:14px;">18/0</div>
<div class="r" style="left:353px;top:682px;width:746px;height:16px;background:#ffffff"></div>
<div class="r" style="left:321px;top:682px;width:33px;height:16px;background:#dfe8f5;border-bottom:1px solid #a9c0dc;box-sizing:border-box;border-right:1px solid #a9c0dc"></div>
<div class="t g" style="left:357px;top:683.0px;height:14px;line-height:14px;">P2339000</div>
<svg class="r" style="left:646px;top:683px" width="13" height="13" viewBox="0 0 13 13"><rect x="0.5" y="0.5" width="12" height="12" fill="#fff" stroke="#333" stroke-width="1"/></svg>
<svg class="r" style="left:715px;top:683px" width="13" height="13" viewBox="0 0 13 13"><rect x="0.5" y="0.5" width="12" height="12" fill="#fff" stroke="#333" stroke-width="1"/></svg>
<svg class="r" style="left:784px;top:683px" width="13" height="13" viewBox="0 0 13 13"><rect x="0.5" y="0.5" width="12" height="12" fill="#fff" stroke="#333" stroke-width="1"/><path d="M3 6.3 L5.5 9 L10.3 3.6" stroke="#3c3c3c" stroke-width="1.5" fill="none"/></svg>
<div class="t g" style="left:502px;width:400px;text-align:right;top:683.0px;height:14px;line-height:14px;">2</div>
<div class="t g" style="left:583px;width:400px;text-align:right;top:683.0px;height:14px;line-height:14px;">2</div>
<div class="t g" style="left:664px;width:400px;text-align:right;top:683.0px;height:14px;line-height:14px;">0,00</div>
<div class="t g" style="left:1078px;top:683.0px;height:14px;line-height:14px;">10/0</div>
<div class="r" style="left:353px;top:698px;width:746px;height:16px;background:#f0f0f0"></div>
<div class="r" style="left:321px;top:698px;width:33px;height:16px;background:#dfe8f5;border-bottom:1px solid #a9c0dc;box-sizing:border-box;border-right:1px solid #a9c0dc"></div>
<div class="t g" style="left:357px;top:699.0px;height:14px;line-height:14px;">P2339000</div>
<svg class="r" style="left:646px;top:699px" width="13" height="13" viewBox="0 0 13 13"><rect x="0.5" y="0.5" width="12" height="12" fill="#fff" stroke="#333" stroke-width="1"/></svg>
<svg class="r" style="left:715px;top:699px" width="13" height="13" viewBox="0 0 13 13"><rect x="0.5" y="0.5" width="12" height="12" fill="#fff" stroke="#333" stroke-width="1"/></svg>
<svg class="r" style="left:784px;top:699px" width="13" height="13" viewBox="0 0 13 13"><rect x="0.5" y="0.5" width="12" height="12" fill="#fff" stroke="#333" stroke-width="1"/></svg>
<div class="t g" style="left:502px;width:400px;text-align:right;top:699.0px;height:14px;line-height:14px;">1</div>
<div class="t g" style="left:583px;width:400px;text-align:right;top:699.0px;height:14px;line-height:14px;">0</div>
<div class="t g" style="left:664px;width:400px;text-align:right;top:699.0px;height:14px;line-height:14px;">1,00</div>
<div class="t g" style="left:1078px;top:699.0px;height:14px;line-height:14px;">11/0</div>
<div class="r" style="left:353px;top:714px;width:746px;height:16px;background:#ffffff"></div>
<div class="r" style="left:321px;top:714px;width:33px;height:16px;background:#dfe8f5;border-bottom:1px solid #a9c0dc;box-sizing:border-box;border-right:1px solid #a9c0dc"></div>
<div class="t g" style="left:357px;top:715.0px;height:14px;line-height:14px;">P2339000</div>
<svg class="r" style="left:646px;top:715px" width="13" height="13" viewBox="0 0 13 13"><rect x="0.5" y="0.5" width="12" height="12" fill="#fff" stroke="#333" stroke-width="1"/></svg>
<svg class="r" style="left:715px;top:715px" width="13" height="13" viewBox="0 0 13 13"><rect x="0.5" y="0.5" width="12" height="12" fill="#fff" stroke="#333" stroke-width="1"/></svg>
<svg class="r" style="left:784px;top:715px" width="13" height="13" viewBox="0 0 13 13"><rect x="0.5" y="0.5" width="12" height="12" fill="#fff" stroke="#333" stroke-width="1"/></svg>
<div class="t g" style="left:502px;width:400px;text-align:right;top:715.0px;height:14px;line-height:14px;">1</div>
<div class="t g" style="left:583px;width:400px;text-align:right;top:715.0px;height:14px;line-height:14px;">0</div>
<div class="t g" style="left:664px;width:400px;text-align:right;top:715.0px;height:14px;line-height:14px;">1,00</div>
<div class="t g" style="left:1078px;top:715.0px;height:14px;line-height:14px;">11/0</div>
<div class="r" style="left:353px;top:730px;width:746px;height:16px;background:#f0f0f0"></div>
<div class="r" style="left:321px;top:730px;width:33px;height:16px;background:#dfe8f5;border-bottom:1px solid #a9c0dc;box-sizing:border-box;border-right:1px solid #a9c0dc"></div>
<div class="t g" style="left:357px;top:731.0px;height:14px;line-height:14px;">T2335</div>
<svg class="r" style="left:646px;top:731px" width="13" height="13" viewBox="0 0 13 13"><rect x="0.5" y="0.5" width="12" height="12" fill="#fff" stroke="#333" stroke-width="1"/></svg>
<svg class="r" style="left:715px;top:731px" width="13" height="13" viewBox="0 0 13 13"><rect x="0.5" y="0.5" width="12" height="12" fill="#fff" stroke="#333" stroke-width="1"/></svg>
<svg class="r" style="left:784px;top:731px" width="13" height="13" viewBox="0 0 13 13"><rect x="0.5" y="0.5" width="12" height="12" fill="#fff" stroke="#333" stroke-width="1"/></svg>
<div class="t g" style="left:502px;width:400px;text-align:right;top:731.0px;height:14px;line-height:14px;">5</div>
<div class="t g" style="left:583px;width:400px;text-align:right;top:731.0px;height:14px;line-height:14px;">0</div>
<div class="t g" style="left:664px;width:400px;text-align:right;top:731.0px;height:14px;line-height:14px;">5,00</div>
<div class="t g" style="left:1078px;top:731.0px;height:14px;line-height:14px;">14/0</div>
<div class="r" style="left:434px;top:234px;width:0;height:512px;border-left:1px dotted #c0c0c0"></div>
<div class="r" style="left:563px;top:234px;width:0;height:512px;border-left:1px dotted #c0c0c0"></div>
<div class="r" style="left:620px;top:234px;width:0;height:512px;border-left:1px dotted #c0c0c0"></div>
<div class="r" style="left:685px;top:234px;width:0;height:512px;border-left:1px dotted #c0c0c0"></div>
<div class="r" style="left:758px;top:234px;width:0;height:512px;border-left:1px dotted #c0c0c0"></div>
<div class="r" style="left:823px;top:234px;width:0;height:512px;border-left:1px dotted #c0c0c0"></div>
<div class="r" style="left:904px;top:234px;width:0;height:512px;border-left:1px dotted #c0c0c0"></div>
<div class="r" style="left:985px;top:234px;width:0;height:512px;border-left:1px dotted #c0c0c0"></div>
<div class="r" style="left:1066px;top:234px;width:0;height:512px;border-left:1px dotted #c0c0c0"></div>
<div class="r" style="left:1099px;top:234px;width:0;height:512px;border-left:1px dotted #c0c0c0"></div>
<div class="r" style="left:354px;top:601px;width:80px;height:2px;background:#000"></div>
<div class="r" style="left:354px;top:617px;width:80px;height:2px;background:#000"></div>
<div class="r" style="left:354px;top:603px;width:80px;height:1px;background:#fff"></div>
<div class="r" style="left:354px;top:616px;width:80px;height:1px;background:#fff"></div>
<div class="r" style="left:321px;top:601px;width:33px;height:17px;background:#fdd089;border-top:1px solid #f39a2e;border-right:1px solid #f39a2e;box-sizing:border-box"></div>
<div class="r" style="left:353px;top:746px;width:746px;height:1px;background:#a0a0a0"></div>
<div class="r" style="left:1099px;top:203px;width:16px;height:803px;background:#7399c6"></div>
<div class="r" style="left:1099px;top:203px;width:16px;height:16px;background:linear-gradient(90deg,#dce8f7 50%,#c3d6f0 50%);border:1px solid #7f9cc7;box-sizing:border-box"></div>
<svg class="r" style="left:1102px;top:207px" width="10" height="6" viewBox="0 0 10 6"><path d="M0 5.5 H10 L5 0 Z" fill="#3c4a6a"/></svg>
<div class="r" style="left:1099px;top:841px;width:16px;height:149px;background:linear-gradient(90deg,#dbe8f8 50%,#c2d5f0 50%);border:1px solid #6f89b4;box-sizing:border-box"></div>
<div class="r" style="left:1099px;top:990px;width:16px;height:16px;background:linear-gradient(90deg,#dce8f7 50%,#c3d6f0 50%);border:1px solid #7f9cc7;box-sizing:border-box"></div>
<svg class="r" style="left:1102px;top:995px" width="10" height="6" viewBox="0 0 10 6"><path d="M0 0 H10 L5 5.5 Z" fill="#3c4a6a"/></svg>
<div class="r" style="left:321px;top:1006px;width:778px;height:15px;background:#7399c6"></div>
<div class="r" style="left:321px;top:1006px;width:16px;height:15px;background:linear-gradient(#dce8f7 50%,#c3d6f0 50%);border:1px solid #7f9cc7;box-sizing:border-box"></div>
<svg class="r" style="left:325px;top:1009px" width="6" height="10" viewBox="0 0 6 10"><path d="M5.5 0 V10 L0 5 Z" fill="#3c4a6a"/></svg>
<div class="r" style="left:337px;top:1006px;width:669px;height:15px;background:linear-gradient(#dbe8f8 50%,#c2d5f0 50%);border:1px solid #6f89b4;box-sizing:border-box"></div>
<div class="r" style="left:1083px;top:1006px;width:16px;height:15px;background:linear-gradient(#dce8f7 50%,#c3d6f0 50%);border:1px solid #7f9cc7;box-sizing:border-box"></div>
<svg class="r" style="left:1088px;top:1009px" width="6" height="10" viewBox="0 0 6 10"><path d="M0 0 V10 L5.5 5 Z" fill="#3c4a6a"/></svg>
<div class="r" style="left:1099px;top:1006px;width:16px;height:15px;background:#7399c6"></div>
<div class="r" style="left:321px;top:1021px;width:795px;height:1px;background:#4c5a78"></div>
<div class="r" style="left:321px;top:1022px;width:796px;height:33px;background:#f0f0f0"></div>
<div class="r" style="left:323px;top:1030px;width:66px;height:20px;background:#efefef;border:1px solid #adadad;box-sizing:border-box"></div>
<svg class="r" style="left:333px;top:1034px" width="11" height="11" viewBox="0 0 11 11"><path d="M1.5 1.5 L9.5 9.5 M9.5 1.5 L1.5 9.5" stroke="#e8462a" stroke-width="2.6"/></svg>
<div class="t g" style="left:349.5px;top:1033.0px;height:14px;line-height:14px;">Fermer</div>
<div class="r" style="left:1116px;top:197px;width:1px;height:858px;background:#fff"></div>
<div class="r" style="left:1117px;top:197px;width:798px;height:858px;background:#f0f0f0"></div>
<div class="r" style="left:1117px;top:197px;width:798px;height:27px;background:linear-gradient(#eeeeee,#f9f9f9)"></div>
<svg class="r" style="left:1116px;top:200px" width="200" height="27" viewBox="0 0 200 27"><defs><linearGradient id="tg" x1="0" y1="0" x2="0" y2="1"><stop offset="0" stop-color="#fafafa"/><stop offset="1" stop-color="#f0f0f0"/></linearGradient></defs><path d="M111 25 L119 7 Q120 5.5 122 5.5 H174 Q175.5 5.5 176.5 7 L188 24.5" fill="url(#tg)" stroke="#9a9a9a" stroke-width="1"/><path d="M11.5 24.5 L23 7 Q24 5.5 26 5.5 H102 Q104 5.5 105 7 L115.7 24.5" fill="url(#tg)" stroke="#9a9a9a" stroke-width="1"/></svg>
<div class="r" style="left:1122px;top:224px;width:793px;height:799px;background:#f0f0f0;border-left:1px solid #9c9c9c;border-bottom:1px solid #9c9c9c;box-sizing:border-box"></div>
<div class="r" style="left:1122px;top:224px;width:6px;height:1px;background:#9c9c9c"></div>
<div class="r" style="left:1231px;top:224px;width:684px;height:1px;background:#9c9c9c"></div>
<div class="r" style="left:1127px;top:227px;width:787px;height:790px;background:#fff"></div>
<div class="r" style="left:1914px;top:224px;width:1px;height:798px;background:#c8c8c8"></div>
<svg class="r" style="left:1139px;top:207px" width="14" height="16" viewBox="0 0 14 16"><path d="M5 1 H10 L13 4 V12 H5 Z" fill="#f6f0e4" stroke="#b8ae9c" stroke-width="0.8"/><path d="M1 4 H6 L9 7 V15 H1 Z" fill="#fbf6ea" stroke="#a89e8c" stroke-width="0.8"/></svg>
<div class="t " style="left:1157px;top:206.5px;height:16px;line-height:16px;font-size:11.5px;font-weight:bold;color:#000">Généralités</div>
<div class="t " style="left:1230.5px;top:206.5px;height:16px;line-height:16px;font-size:11px;color:#000">Qui, quand ?</div>
<div class="r" style="left:1128px;top:229px;width:550px;height:25px;background:#00a5b3"></div>
<div class="t sec" style="left:1160px;top:235.5px;height:16px;line-height:16px;">GENERALITES</div>
<div class="t lbl" style="left:829px;width:400px;text-align:right;top:261.5px;height:14px;line-height:14px;">Série</div>
<div class="r" style="left:1237px;top:259.5px;width:200px;height:20px;background:#e9eef9"></div>
<div class="t val" style="left:1240px;top:262.0px;height:16px;line-height:16px;">P23360001</div>
<div class="t lbl" style="left:829px;width:400px;text-align:right;top:286.5px;height:14px;line-height:14px;">Libellé série</div>
<div class="r" style="left:1237px;top:284.5px;width:200px;height:20px;background:#e9eef9"></div>
<div class="t val" style="left:1240px;top:287.0px;height:16px;line-height:16px;">Atelier U1 2023S36</div>
<div class="t lbl" style="left:1159px;width:400px;text-align:right;top:286.5px;height:14px;line-height:14px;">Unité Production</div>
<div class="r" style="left:1567px;top:285px;width:90px;height:17px;background:#e9eef9"></div>
<div class="t val" style="left:1570px;top:286.0px;height:16px;line-height:16px;">U1</div>
<div class="r" style="left:1660px;top:286px;width:14px;height:14px;background:#fff;border:1px solid #a8a8a8;box-sizing:border-box;box-shadow:inset 0 0 0 1px #d6d6d6"></div>
<div class="t " style="left:1663.5px;top:286.0px;height:14px;line-height:14px;font-size:11px;font-weight:bold;color:#000">?</div>
<div class="t lbl" style="left:829px;width:400px;text-align:right;top:311.5px;height:14px;line-height:14px;">Gestionnaire</div>
<div class="r" style="left:1237px;top:309.5px;width:200px;height:20px;background:#e9eef9"></div>
<div class="t val" style="left:1240px;top:312.0px;height:16px;line-height:16px;">U1</div>
<div class="r" style="left:1440px;top:311.0px;width:14px;height:14px;background:#fff;border:1px solid #a8a8a8;box-sizing:border-box;box-shadow:inset 0 0 0 1px #d6d6d6"></div>
<div class="t " style="left:1443.5px;top:311.0px;height:14px;line-height:14px;font-size:11px;font-weight:bold;color:#000">?</div>
<div class="t lbl" style="left:1460px;top:312.0px;height:14px;line-height:14px;">Site de production 1</div>
<div class="r" style="left:1128px;top:340px;width:550px;height:25px;background:#00a5b3"></div>
<div class="t sec" style="left:1160px;top:346.5px;height:16px;line-height:16px;">PLANIFICATION ET SUIVI</div>
<div class="t lbl" style="left:829px;width:400px;text-align:right;top:371.5px;height:14px;line-height:14px;">Date prévue début</div>
<div class="r" style="left:1237px;top:369.5px;width:200px;height:20px;background:#e9eef9"></div>
<div class="t val" style="left:1240px;top:372.0px;height:16px;line-height:16px;">28/08/2023</div>
<div class="r" style="left:1440px;top:371.0px;width:14px;height:14px;background:#fff;border:1px solid #a8a8a8;box-sizing:border-box;box-shadow:inset 0 0 0 1px #d6d6d6"></div>
<div class="t " style="left:1443.5px;top:371.0px;height:14px;line-height:14px;font-size:11px;font-weight:bold;color:#000">?</div>
<div class="t lbl" style="left:829px;width:400px;text-align:right;top:396.5px;height:14px;line-height:14px;">Date prévue fin</div>
<div class="r" style="left:1237px;top:394.5px;width:200px;height:20px;background:#e9eef9"></div>
<div class="t val" style="left:1240px;top:397.0px;height:16px;line-height:16px;">06/09/2023</div>
<div class="r" style="left:1440px;top:396.0px;width:14px;height:14px;background:#fff;border:1px solid #a8a8a8;box-sizing:border-box;box-shadow:inset 0 0 0 1px #d6d6d6"></div>
<div class="t " style="left:1443.5px;top:396.0px;height:14px;line-height:14px;font-size:11px;font-weight:bold;color:#000">?</div>
<div class="t lbl" style="left:829px;width:400px;text-align:right;top:421.5px;height:14px;line-height:14px;">Date réelle debut</div>
<div class="r" style="left:1237px;top:419.5px;width:200px;height:20px;background:#e9eef9"></div>
<div class="t val" style="left:1240px;top:422.0px;height:16px;line-height:16px;">01/08/2023</div>
<div class="r" style="left:1440px;top:421.0px;width:14px;height:14px;background:#fff;border:1px solid #a8a8a8;box-sizing:border-box;box-shadow:inset 0 0 0 1px #d6d6d6"></div>
<div class="t " style="left:1443.5px;top:421.0px;height:14px;line-height:14px;font-size:11px;font-weight:bold;color:#000">?</div>
<div class="t lbl" style="left:829px;width:400px;text-align:right;top:446.5px;height:14px;line-height:14px;">Date réelle fin</div>
<div class="r" style="left:1237px;top:444.5px;width:200px;height:20px;background:#e9eef9"></div>
<div class="t val" style="left:1240px;top:447.0px;height:16px;line-height:16px;">01/08/2023</div>
<div class="r" style="left:1440px;top:446.0px;width:14px;height:14px;background:#fff;border:1px solid #a8a8a8;box-sizing:border-box;box-shadow:inset 0 0 0 1px #d6d6d6"></div>
<div class="t " style="left:1443.5px;top:446.0px;height:14px;line-height:14px;font-size:11px;font-weight:bold;color:#000">?</div>
<div class="r" style="left:1128px;top:470px;width:550px;height:25px;background:#00a5b3"></div>
<div class="t sec" style="left:1160px;top:476.5px;height:16px;line-height:16px;">STATUT</div>
<div class="t lbl" style="left:832px;width:400px;text-align:right;top:501.5px;height:14px;line-height:14px;">Fabriqué partiellement</div>
<div class="r" style="left:1237px;top:500.5px;width:10px;height:16px;background:#e9eef9"></div>
<div class="r" style="left:1237px;top:503.5px;width:10px;height:10px;background:#fff;border:1px solid #c4c4c4;box-sizing:border-box"></div>
<div class="t lbl" style="left:832px;width:400px;text-align:right;top:521.5px;height:14px;line-height:14px;">Fabriquée</div>
<div class="r" style="left:1237px;top:520.5px;width:10px;height:16px;background:#e9eef9"></div>
<div class="r" style="left:1237px;top:523.5px;width:10px;height:10px;background:#fff;border:1px solid #c4c4c4;box-sizing:border-box"></div>
<svg class="r" style="left:1237px;top:523.5px" width="10" height="10" viewBox="0 0 10 10"><path d="M2 5 L4 7.2 L8 2.5" stroke="#b0b0b0" stroke-width="1" fill="none"/></svg>
<div class="t lbl" style="left:832px;width:400px;text-align:right;top:541.5px;height:14px;line-height:14px;">Lancement atelier</div>
<div class="r" style="left:1237px;top:540.5px;width:10px;height:16px;background:#e9eef9"></div>
<div class="r" style="left:1237px;top:543.5px;width:10px;height:10px;background:#fff;border:1px solid #c4c4c4;box-sizing:border-box"></div>
<div class="r" style="left:1128px;top:560px;width:550px;height:25px;background:#00a5b3"></div>
<div class="t sec" style="left:1160px;top:566.5px;height:16px;line-height:16px;">SUIVI</div>
<div class="t lbl" style="left:829px;width:400px;text-align:right;top:591.5px;height:14px;line-height:14px;">Quantité lancée</div>
<div class="r" style="left:1237px;top:589.5px;width:100px;height:20px;background:#e9eef9"></div>
<div class="t val" style="left:1260px;top:592.0px;height:16px;line-height:16px;">3,00</div>
<div class="t lbl" style="left:829px;width:400px;text-align:right;top:616.5px;height:14px;line-height:14px;">Quantité fabriquée</div>
<div class="r" style="left:1237px;top:614.5px;width:100px;height:20px;background:#e9eef9"></div>
<div class="t val" style="left:1260px;top:617.0px;height:16px;line-height:16px;">3,00</div>
<div class="t lbl" style="left:829px;width:400px;text-align:right;top:641.5px;height:14px;line-height:14px;">Quantité restante</div>
<div class="r" style="left:1237px;top:639.5px;width:100px;height:20px;background:#e9eef9"></div>
<div class="t val" style="left:1260px;top:642.0px;height:16px;line-height:16px;">0,00</div>
<div class="r" style="left:1125px;top:1030px;width:80px;height:20px;background:#d3d3d3;border:1px solid #c4c4c4;box-sizing:border-box"></div>
<svg class="r" style="left:1133px;top:1034px" width="13" height="12" viewBox="0 0 13 12"><path d="M1.5 6.5 L5 10 L11.5 2.5" stroke="#b9b9b9" stroke-width="2.2" fill="none"/></svg>
<div class="t " style="left:1150px;top:1033.0px;height:14px;line-height:14px;font-size:11px;color:#555">Validation</div>
<div class="r" style="left:1209px;top:1030px;width:80px;height:20px;background:#d3d3d3;border:1px solid #c4c4c4;box-sizing:border-box"></div>
<div class="t " style="left:1220px;top:1033.0px;height:14px;line-height:14px;font-size:11px;color:#555">Sauvegarde</div>
<div class="r" style="left:1293px;top:1030px;width:80px;height:20px;background:#d3d3d3;border:1px solid #c4c4c4;box-sizing:border-box"></div>
<svg class="r" style="left:1301px;top:1034px" width="13" height="12" viewBox="0 0 13 12"><path d="M1.5 1.5 L10.5 10.5 M10.5 1.5 L1.5 10.5" stroke="#a9a9a9" stroke-width="2.2"/></svg>
<div class="t " style="left:1320px;top:1033.0px;height:14px;line-height:14px;font-size:11px;color:#555">Abandon</div>
<div class="r" style="left:403px;top:285px;width:253px;height:800px;background:#f2f2f2;border:1px solid #cacaca;box-sizing:border-box;box-shadow:inset 1px 1px 0 #fbfbfb"></div>
<div class="r" style="left:656px;top:290px;width:3px;height:800px;background:linear-gradient(90deg,rgba(0,0,0,0.32),rgba(0,0,0,0.12))"></div>
<div class="t m" style="left:438.5px;top:287.0px;height:22px;line-height:22px;">Gestion Lignes (Maj+F3)</div>
<div class="r" style="left:434px;top:313px;width:219px;height:1px;background:#d5d5d5"></div>
<div class="t m" style="left:438.5px;top:316.0px;height:22px;line-height:22px;">Création (F9)</div>
<div class="t m" style="left:438.5px;top:338.0px;height:22px;line-height:22px;">Modification (F1)</div>
<div class="t md" style="left:438.5px;top:360.0px;height:22px;line-height:22px;">Suppression (F6)</div>
<div class="t m" style="left:438.5px;top:382.0px;height:22px;line-height:22px;">Détail (F8)</div>
<div class="t m" style="left:438.5px;top:404.0px;height:22px;line-height:22px;">Consultation Inf. Techniques</div>
<div class="t md" style="left:438.5px;top:426.0px;height:22px;line-height:22px;">Historique (F10)</div>
<div class="t md" style="left:438.5px;top:448.0px;height:22px;line-height:22px;">Eléments Récents (Maj+F8)</div>
<div class="t m" style="left:438.5px;top:470.0px;height:22px;line-height:22px;">Historique Messages / Entité</div>
<div class="t md" style="left:438.5px;top:492.0px;height:22px;line-height:22px;">Envoyer un message</div>
<div class="r" style="left:434px;top:518px;width:219px;height:1px;background:#d5d5d5"></div>
<div class="t m" style="left:438.5px;top:521.0px;height:22px;line-height:22px;">Nouvelle Tâche</div>
<div class="t md" style="left:438.5px;top:543.0px;height:22px;line-height:22px;">Tâches de l&#x27;Entité</div>
<div class="r" style="left:434px;top:569px;width:219px;height:1px;background:#d5d5d5"></div>
<div class="t m" style="left:438.5px;top:572.0px;height:22px;line-height:22px;">Joindre un document</div>
<div class="t m" style="left:438.5px;top:594.0px;height:22px;line-height:22px;">Documents GED</div>
<div class="r" style="left:434px;top:620px;width:219px;height:1px;background:#d5d5d5"></div>
<div class="t m" style="left:438.5px;top:623.0px;height:22px;line-height:22px;">Accès à</div>
<svg class="r" style="left:638.5px;top:630px" width="6" height="10" viewBox="0 0 6 10"><path d="M1 1 L4.8 4.7 L1 8.4" stroke="#3a3a3a" stroke-width="1.2" fill="none"/></svg>
<div class="r" style="left:434px;top:649px;width:219px;height:1px;background:#d5d5d5"></div>
<div class="t m" style="left:438.5px;top:652.0px;height:22px;line-height:22px;">Lancement Atelier</div>
<svg class="r" style="left:638.5px;top:659px" width="6" height="10" viewBox="0 0 6 10"><path d="M1 1 L4.8 4.7 L1 8.4" stroke="#3a3a3a" stroke-width="1.2" fill="none"/></svg>
<div class="r" style="left:434px;top:678px;width:219px;height:1px;background:#d5d5d5"></div>
<div class="t m" style="left:438.5px;top:681.0px;height:22px;line-height:22px;">Déclaration de Fabrication</div>
<svg class="r" style="left:638.5px;top:688px" width="6" height="10" viewBox="0 0 6 10"><path d="M1 1 L4.8 4.7 L1 8.4" stroke="#3a3a3a" stroke-width="1.2" fill="none"/></svg>
<div class="t m" style="left:438.5px;top:703.0px;height:22px;line-height:22px;">His. Déclarations / Série</div>
<div class="r" style="left:434px;top:729px;width:219px;height:1px;background:#d5d5d5"></div>
<div class="t m" style="left:438.5px;top:732.0px;height:22px;line-height:22px;">Informations Suivies</div>
<div class="r" style="left:434px;top:758px;width:219px;height:1px;background:#d5d5d5"></div>
<div class="t m" style="left:438.5px;top:761.0px;height:22px;line-height:22px;">Déclaration Co-Produits</div>
<div class="r" style="left:434px;top:787px;width:219px;height:1px;background:#d5d5d5"></div>
<div class="r" style="left:405px;top:791px;width:249px;height:22px;background:#8f97f5"></div>
<div class="t m" style="left:438.5px;top:790.0px;height:22px;line-height:22px;">Composants Rattachés</div>
<div class="t m" style="left:438.5px;top:812.0px;height:22px;line-height:22px;">Visualisation File d&#x27;Attente</div>
<div class="t m" style="left:438.5px;top:834.0px;height:22px;line-height:22px;">Caract. File d&#x27;Attente</div>
<div class="r" style="left:434px;top:860px;width:219px;height:1px;background:#d5d5d5"></div>
<div class="t m" style="left:438.5px;top:863.0px;height:22px;line-height:22px;">Solde Série (Maj+F6)</div>
<div class="t m" style="left:438.5px;top:885.0px;height:22px;line-height:22px;">Déblocage Séries</div>
<div class="t m" style="left:438.5px;top:907.0px;height:22px;line-height:22px;">Re-génération Séries</div>
<div class="r" style="left:434px;top:933px;width:219px;height:1px;background:#d5d5d5"></div>
<div class="t m" style="left:438.5px;top:936.0px;height:22px;line-height:22px;">Ma Présentation de Démarrage</div>
<div class="t m" style="left:438.5px;top:958.0px;height:22px;line-height:22px;">Actualiser la Présentation</div>
<div class="t m" style="left:438.5px;top:980.0px;height:22px;line-height:22px;">Présentations</div>
<svg class="r" style="left:638.5px;top:987px" width="6" height="10" viewBox="0 0 6 10"><path d="M1 1 L4.8 4.7 L1 8.4" stroke="#3a3a3a" stroke-width="1.2" fill="none"/></svg>
<div class="r" style="left:434px;top:1006px;width:219px;height:1px;background:#d5d5d5"></div>
<div class="t m" style="left:438.5px;top:1009.0px;height:22px;line-height:22px;">Définition Filtres et Tris</div>
<div class="t m" style="left:438.5px;top:1031.0px;height:22px;line-height:22px;">Sélections Filtres et Tris</div>
<svg class="r" style="left:638.5px;top:1038px" width="6" height="10" viewBox="0 0 6 10"><path d="M1 1 L4.8 4.7 L1 8.4" stroke="#3a3a3a" stroke-width="1.2" fill="none"/></svg>
<svg class="r" style="left:540.5px;top:800px" width="21" height="33" viewBox="0 0 21 33"><defs><clipPath id="cc"><path d="M1.5 1.5 L1.5 24 L6.5 18.8 L10.3 29.3 L14 27.8 L10.2 17.5 L17.5 17.5 Z"/></clipPath></defs><path d="M1.5 1.5 L1.5 24 L6.5 18.8 L10.3 29.3 L14 27.8 L10.2 17.5 L17.5 17.5 Z" fill="#fff"/><rect x="0" y="0" width="21" height="12.5" fill="#f58ef5" clip-path="url(#cc)"/><path d="M1.5 1.5 L1.5 24 L6.5 18.8 L10.3 29.3 L14 27.8 L10.2 17.5 L17.5 17.5 Z" fill="none" stroke="#000" stroke-width="2" stroke-linejoin="miter"/></svg>
</body></html>
